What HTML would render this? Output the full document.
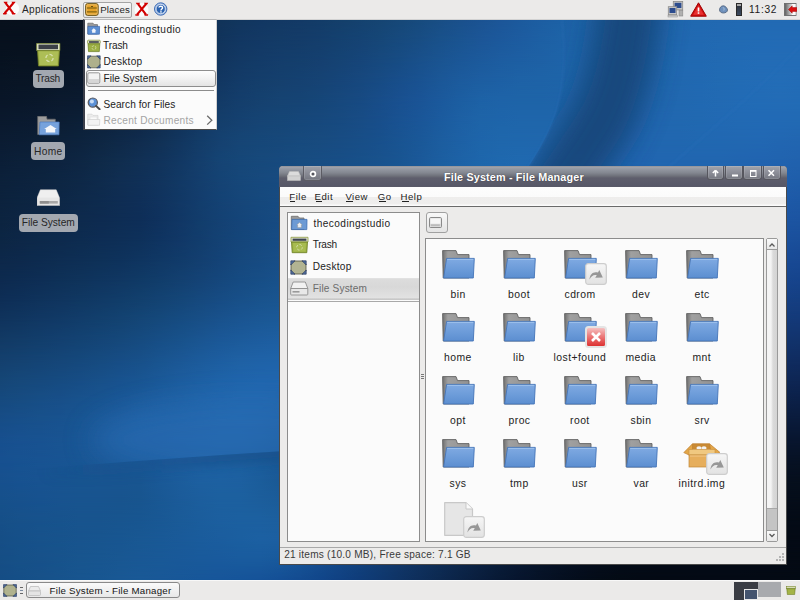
<!DOCTYPE html>
<html><head><meta charset="utf-8">
<style>
*{margin:0;padding:0;box-sizing:border-box}
html,body{width:800px;height:600px;overflow:hidden;background:#123}
body{position:relative;font-family:"Liberation Sans",sans-serif;font-size:11px;color:#1a1a1a}
.abs{position:absolute}
.lbl{font-size:10.6px;color:#262626}
.t{position:absolute;white-space:nowrap;line-height:1}
#wall{position:absolute;left:0;top:0;width:800px;height:600px}
#toppanel{position:absolute;left:0;top:0;width:800px;height:20px;background:#ebeae9;border-bottom:1px solid #d2d2d2}
#botpanel{position:absolute;left:0;top:580px;width:800px;height:20px;background:#ebeae9;border-top:1px solid #f8f8f8}
</style></head><body>
<div id="wallgrid" style="position:absolute;left:0;top:0;width:800px;height:600px;overflow:hidden"><div style="position:absolute;left:0;top:0px;width:800px;height:20px;background:linear-gradient(90deg,#07101c 0px,#07101c 20px,#07111d 40px,#07121e 60px,#081321 80px,#091525 100px,#0a182a 120px,#0b1c31 140px,#0d213a 160px,#0e2644 180px,#0f2c4d 200px,#113055 220px,#11335a 240px,#12355e 260px,#123760 280px,#123862 300px,#133a65 320px,#133d68 340px,#14406b 360px,#15436f 380px,#164674 400px,#17497a 420px,#184b81 440px,#194e88 460px,#1a518e 480px,#1b5494 500px,#1c589a 520px,#1d5c9f 540px,#1d60a3 560px,#1e62a6 580px,#1e64a9 600px,#1f65ab 620px,#2066ac 640px,#2067ae 660px,#2167af 680px,#2168b0 700px,#2268b1 720px,#2269b2 740px,#2269b3 760px,#2269b3 780px,#2269b3 800px)"></div><div style="position:absolute;left:0;top:0px;width:800px;height:20px;background:linear-gradient(90deg,#07101c 0px,#07111d 20px,#07111e 40px,#07121f 60px,#081322 80px,#091526 100px,#0a182b 120px,#0b1c32 140px,#0d213c 160px,#0e2746 180px,#102e51 200px,#113359 220px,#12365e 240px,#123762 260px,#133964 280px,#133a66 300px,#133c68 320px,#143f6b 340px,#14426f 360px,#154573 380px,#164878 400px,#174b7e 420px,#194e85 440px,#1a508c 460px,#1b5392 480px,#1c5698 500px,#1c5a9d 520px,#1d5ea2 540px,#1d62a6 560px,#1e64a8 580px,#1f65aa 600px,#1f66ac 620px,#2067ad 640px,#2067af 660px,#2168b0 680px,#2169b1 700px,#2269b2 720px,#226ab3 740px,#226ab4 760px,#226ab4 780px,#226ab4 800px);-webkit-mask-image:linear-gradient(transparent,#000);mask-image:linear-gradient(transparent,#000)"></div><div style="position:absolute;left:0;top:20px;width:800px;height:20px;background:linear-gradient(90deg,#07101c 0px,#07111d 20px,#07111e 40px,#07121f 60px,#081322 80px,#091526 100px,#0a182b 120px,#0b1c32 140px,#0d213c 160px,#0e2746 180px,#102e51 200px,#113359 220px,#12365e 240px,#123762 260px,#133964 280px,#133a66 300px,#133c68 320px,#143f6b 340px,#14426f 360px,#154573 380px,#164878 400px,#174b7e 420px,#194e85 440px,#1a508c 460px,#1b5392 480px,#1c5698 500px,#1c5a9d 520px,#1d5ea2 540px,#1d62a6 560px,#1e64a8 580px,#1f65aa 600px,#1f66ac 620px,#2067ad 640px,#2067af 660px,#2168b0 680px,#2169b1 700px,#2269b2 720px,#226ab3 740px,#226ab4 760px,#226ab4 780px,#226ab4 800px)"></div><div style="position:absolute;left:0;top:20px;width:800px;height:20px;background:linear-gradient(90deg,#07111e 0px,#07111e 20px,#07121f 40px,#081321 60px,#091424 80px,#091627 100px,#0a192d 120px,#0c1d34 140px,#0d223e 160px,#0f2949 180px,#102f53 200px,#11345c 220px,#123762 240px,#133965 260px,#133b67 280px,#143c69 300px,#143e6c 320px,#144170 340px,#154374 360px,#164778 380px,#174a7e 400px,#184d84 420px,#19518b 440px,#1a5491 460px,#1c5697 480px,#1c599c 500px,#1d5ca0 520px,#1d60a4 540px,#1e63a7 560px,#1e64a9 580px,#1f66ab 600px,#1f66ad 620px,#2067ae 640px,#2068af 660px,#2168b0 680px,#2169b2 700px,#226ab3 720px,#226bb4 740px,#226bb5 760px,#236bb5 780px,#236bb5 800px);-webkit-mask-image:linear-gradient(transparent,#000);mask-image:linear-gradient(transparent,#000)"></div><div style="position:absolute;left:0;top:40px;width:800px;height:20px;background:linear-gradient(90deg,#07111e 0px,#07111e 20px,#07121f 40px,#081321 60px,#091424 80px,#091627 100px,#0a192d 120px,#0c1d34 140px,#0d223e 160px,#0f2949 180px,#102f53 200px,#11345c 220px,#123762 240px,#133965 260px,#133b67 280px,#143c69 300px,#143e6c 320px,#144170 340px,#154374 360px,#164778 380px,#174a7e 400px,#184d84 420px,#19518b 440px,#1a5491 460px,#1c5697 480px,#1c599c 500px,#1d5ca0 520px,#1d60a4 540px,#1e63a7 560px,#1e64a9 580px,#1f66ab 600px,#1f66ad 620px,#2067ae 640px,#2068af 660px,#2168b0 680px,#2169b2 700px,#226ab3 720px,#226bb4 740px,#226bb5 760px,#236bb5 780px,#236bb5 800px)"></div><div style="position:absolute;left:0;top:40px;width:800px;height:20px;background:linear-gradient(90deg,#071220 0px,#081321 20px,#081322 40px,#091424 60px,#091627 80px,#0a172a 100px,#0b1a2f 120px,#0c1e37 140px,#0d2340 160px,#0f2a4b 180px,#103056 200px,#12355e 220px,#133964 240px,#133b68 260px,#143d6b 280px,#143f6d 300px,#154070 320px,#154374 340px,#164579 360px,#17497e 380px,#174c84 400px,#19508b 420px,#1a5491 440px,#1b5797 460px,#1c5a9c 480px,#1d5da0 500px,#1d5fa3 520px,#1e61a5 540px,#1e63a8 560px,#1e65aa 580px,#1f66ac 600px,#1f66ad 620px,#2067ae 640px,#2068af 660px,#2169b1 680px,#2169b2 700px,#226ab3 720px,#226bb5 740px,#236cb6 760px,#236cb6 780px,#236cb6 800px);-webkit-mask-image:linear-gradient(transparent,#000);mask-image:linear-gradient(transparent,#000)"></div><div style="position:absolute;left:0;top:60px;width:800px;height:20px;background:linear-gradient(90deg,#071220 0px,#081321 20px,#081322 40px,#091424 60px,#091627 80px,#0a172a 100px,#0b1a2f 120px,#0c1e37 140px,#0d2340 160px,#0f2a4b 180px,#103056 200px,#12355e 220px,#133964 240px,#133b68 260px,#143d6b 280px,#143f6d 300px,#154070 320px,#154374 340px,#164579 360px,#17497e 380px,#174c84 400px,#19508b 420px,#1a5491 440px,#1b5797 460px,#1c5a9c 480px,#1d5da0 500px,#1d5fa3 520px,#1e61a5 540px,#1e63a8 560px,#1e65aa 580px,#1f66ac 600px,#1f66ad 620px,#2067ae 640px,#2068af 660px,#2169b1 680px,#2169b2 700px,#226ab3 720px,#226bb5 740px,#236cb6 760px,#236cb6 780px,#236cb6 800px)"></div><div style="position:absolute;left:0;top:60px;width:800px;height:20px;background:linear-gradient(90deg,#081424 0px,#091525 20px,#091626 40px,#091728 60px,#0a182b 80px,#0b1a2e 100px,#0b1c33 120px,#0c203a 140px,#0e2543 160px,#0f2c4e 180px,#113259 200px,#123762 220px,#133b68 240px,#143e6b 260px,#15406e 280px,#154171 300px,#164374 320px,#164579 340px,#17487e 360px,#174b84 380px,#184e8b 400px,#195291 420px,#1b5797 440px,#1c5b9d 460px,#1d5ea1 480px,#1d60a4 500px,#1e62a6 520px,#1e63a7 540px,#1e64a8 560px,#1f65aa 580px,#1f66ac 600px,#2066ad 620px,#2067af 640px,#2068af 660px,#2168b0 680px,#2169b2 700px,#226bb3 720px,#226cb5 740px,#236cb6 760px,#236db7 780px,#236cb6 800px);-webkit-mask-image:linear-gradient(transparent,#000);mask-image:linear-gradient(transparent,#000)"></div><div style="position:absolute;left:0;top:80px;width:800px;height:20px;background:linear-gradient(90deg,#081424 0px,#091525 20px,#091626 40px,#091728 60px,#0a182b 80px,#0b1a2e 100px,#0b1c33 120px,#0c203a 140px,#0e2543 160px,#0f2c4e 180px,#113259 200px,#123762 220px,#133b68 240px,#143e6b 260px,#15406e 280px,#154171 300px,#164374 320px,#164579 340px,#17487e 360px,#174b84 380px,#184e8b 400px,#195291 420px,#1b5797 440px,#1c5b9d 460px,#1d5ea1 480px,#1d60a4 500px,#1e62a6 520px,#1e63a7 540px,#1e64a8 560px,#1f65aa 580px,#1f66ac 600px,#2066ad 620px,#2067af 640px,#2068af 660px,#2168b0 680px,#2169b2 700px,#226bb3 720px,#226cb5 740px,#236cb6 760px,#236db7 780px,#236cb6 800px)"></div><div style="position:absolute;left:0;top:80px;width:800px;height:20px;background:linear-gradient(90deg,#091628 0px,#091729 20px,#0a182b 40px,#0b1a2e 60px,#0b1b30 80px,#0c1d34 100px,#0c1f38 120px,#0d223e 140px,#0f2848 160px,#102e53 180px,#12355d 200px,#133a66 220px,#143e6c 240px,#15416f 260px,#164372 280px,#164474 300px,#164678 320px,#17487d 340px,#174a82 360px,#184d89 380px,#195090 400px,#1a5496 420px,#1b599c 440px,#1c5ea1 460px,#1d62a6 480px,#1e63a8 500px,#1e64a8 520px,#1e64a8 540px,#1f64a9 560px,#1f65ab 580px,#2066ad 600px,#2066ae 620px,#2067af 640px,#2167af 660px,#2168b0 680px,#2169b2 700px,#226ab3 720px,#226bb5 740px,#226cb6 760px,#236cb6 780px,#226cb6 800px);-webkit-mask-image:linear-gradient(transparent,#000);mask-image:linear-gradient(transparent,#000)"></div><div style="position:absolute;left:0;top:100px;width:800px;height:20px;background:linear-gradient(90deg,#091628 0px,#091729 20px,#0a182b 40px,#0b1a2e 60px,#0b1b30 80px,#0c1d34 100px,#0c1f38 120px,#0d223e 140px,#0f2848 160px,#102e53 180px,#12355d 200px,#133a66 220px,#143e6c 240px,#15416f 260px,#164372 280px,#164474 300px,#164678 320px,#17487d 340px,#174a82 360px,#184d89 380px,#195090 400px,#1a5496 420px,#1b599c 440px,#1c5ea1 460px,#1d62a6 480px,#1e63a8 500px,#1e64a8 520px,#1e64a8 540px,#1f64a9 560px,#1f65ab 580px,#2066ad 600px,#2066ae 620px,#2067af 640px,#2167af 660px,#2168b0 680px,#2169b2 700px,#226ab3 720px,#226bb5 740px,#226cb6 760px,#236cb6 780px,#226cb6 800px)"></div><div style="position:absolute;left:0;top:100px;width:800px;height:20px;background:linear-gradient(90deg,#0a192d 0px,#0a1a2f 20px,#0b1b31 40px,#0c1d33 60px,#0c1f37 80px,#0d213b 100px,#0e2440 120px,#0f2746 140px,#102c4f 160px,#113259 180px,#133863 200px,#143e6b 220px,#154170 240px,#164474 260px,#164676 280px,#174779 300px,#17487c 320px,#174a80 340px,#184c85 360px,#184e8b 380px,#195292 400px,#1a5698 420px,#1b5b9e 440px,#1d60a4 460px,#1e64a8 480px,#1e65aa 500px,#1f66ab 520px,#1f66ab 540px,#1f66ab 560px,#2066ac 580px,#2066ae 600px,#2066af 620px,#2166af 640px,#2167b0 660px,#2168b0 680px,#2169b1 700px,#2269b3 720px,#226ab4 740px,#226ab5 760px,#226ab5 780px,#226ab4 800px);-webkit-mask-image:linear-gradient(transparent,#000);mask-image:linear-gradient(transparent,#000)"></div><div style="position:absolute;left:0;top:120px;width:800px;height:20px;background:linear-gradient(90deg,#0a192d 0px,#0a1a2f 20px,#0b1b31 40px,#0c1d33 60px,#0c1f37 80px,#0d213b 100px,#0e2440 120px,#0f2746 140px,#102c4f 160px,#113259 180px,#133863 200px,#143e6b 220px,#154170 240px,#164474 260px,#164676 280px,#174779 300px,#17487c 320px,#174a80 340px,#184c85 360px,#184e8b 380px,#195292 400px,#1a5698 420px,#1b5b9e 440px,#1d60a4 460px,#1e64a8 480px,#1e65aa 500px,#1f66ab 520px,#1f66ab 540px,#1f66ab 560px,#2066ac 580px,#2066ae 600px,#2066af 620px,#2166af 640px,#2167b0 660px,#2168b0 680px,#2169b1 700px,#2269b3 720px,#226ab4 740px,#226ab5 760px,#226ab5 780px,#226ab4 800px)"></div><div style="position:absolute;left:0;top:120px;width:800px;height:20px;background:linear-gradient(90deg,#0b1c32 0px,#0b1d34 20px,#0c1f36 40px,#0d2139 60px,#0d233d 80px,#0e2642 100px,#0f2948 120px,#102c4e 140px,#113155 160px,#12365f 180px,#133c68 200px,#154170 220px,#164575 240px,#164778 260px,#17487a 280px,#174a7d 300px,#184b7f 320px,#184c83 340px,#184e87 360px,#18508c 380px,#195492 400px,#1a5898 420px,#1c5d9f 440px,#1d61a5 460px,#1e65aa 480px,#1f67ac 500px,#1f67ad 520px,#2067ad 540px,#2067ae 560px,#2066ae 580px,#2066af 600px,#2166af 620px,#2166b0 640px,#2167b0 660px,#2167b0 680px,#2168b1 700px,#2168b2 720px,#2268b2 740px,#2268b3 760px,#2267b2 780px,#2266b1 800px);-webkit-mask-image:linear-gradient(transparent,#000);mask-image:linear-gradient(transparent,#000)"></div><div style="position:absolute;left:0;top:140px;width:800px;height:20px;background:linear-gradient(90deg,#0b1c32 0px,#0b1d34 20px,#0c1f36 40px,#0d2139 60px,#0d233d 80px,#0e2642 100px,#0f2948 120px,#102c4e 140px,#113155 160px,#12365f 180px,#133c68 200px,#154170 220px,#164575 240px,#164778 260px,#17487a 280px,#174a7d 300px,#184b7f 320px,#184c83 340px,#184e87 360px,#18508c 380px,#195492 400px,#1a5898 420px,#1c5d9f 440px,#1d61a5 460px,#1e65aa 480px,#1f67ac 500px,#1f67ad 520px,#2067ad 540px,#2067ae 560px,#2066ae 580px,#2066af 600px,#2166af 620px,#2166b0 640px,#2167b0 660px,#2167b0 680px,#2168b1 700px,#2168b2 720px,#2268b2 740px,#2268b3 760px,#2267b2 780px,#2266b1 800px)"></div><div style="position:absolute;left:0;top:140px;width:800px;height:20px;background:linear-gradient(90deg,#0b1e37 0px,#0c2039 20px,#0c213b 40px,#0d233f 60px,#0e2643 80px,#0f2a48 100px,#102d4e 120px,#113054 140px,#11335b 160px,#123863 180px,#143e6c 200px,#154474 220px,#164778 240px,#17497b 260px,#174a7e 280px,#184c80 300px,#184d83 320px,#184e86 340px,#185089 360px,#19528d 380px,#195592 400px,#1b5999 420px,#1c5ea0 440px,#1d62a6 460px,#1e66ab 480px,#1f68ae 500px,#2069af 520px,#2068b0 540px,#2067b0 560px,#2167b0 580px,#2166b0 600px,#2166b0 620px,#2165b0 640px,#2166b0 660px,#2166b0 680px,#2166b0 700px,#2166b0 720px,#2165b0 740px,#2164b0 760px,#2163af 780px,#2162ae 800px);-webkit-mask-image:linear-gradient(transparent,#000);mask-image:linear-gradient(transparent,#000)"></div><div style="position:absolute;left:0;top:160px;width:800px;height:20px;background:linear-gradient(90deg,#0b1e37 0px,#0c2039 20px,#0c213b 40px,#0d233f 60px,#0e2643 80px,#0f2a48 100px,#102d4e 120px,#113054 140px,#11335b 160px,#123863 180px,#143e6c 200px,#154474 220px,#164778 240px,#17497b 260px,#174a7e 280px,#184c80 300px,#184d83 320px,#184e86 340px,#185089 360px,#19528d 380px,#195592 400px,#1b5999 420px,#1c5ea0 440px,#1d62a6 460px,#1e66ab 480px,#1f68ae 500px,#2069af 520px,#2068b0 540px,#2067b0 560px,#2167b0 580px,#2166b0 600px,#2166b0 620px,#2165b0 640px,#2166b0 660px,#2166b0 680px,#2166b0 700px,#2166b0 720px,#2165b0 740px,#2164b0 760px,#2163af 780px,#2162ae 800px)"></div><div style="position:absolute;left:0;top:160px;width:800px;height:20px;background:linear-gradient(90deg,#0c213a 0px,#0c223d 20px,#0d243f 40px,#0d2643 60px,#0e2847 80px,#0f2b4c 100px,#102e52 120px,#103057 140px,#11345d 160px,#123965 180px,#143e6d 200px,#154374 220px,#164779 240px,#17497d 260px,#174b80 280px,#184d82 300px,#184f85 320px,#195088 340px,#19528c 360px,#195490 380px,#1a5795 400px,#1b5b9b 420px,#1c60a1 440px,#1d63a7 460px,#1f66ac 480px,#1f68af 500px,#2069b0 520px,#2069b1 540px,#2068b1 560px,#2167b1 580px,#2166b0 600px,#2165b0 620px,#2164b0 640px,#2064af 660px,#2063af 680px,#2063af 700px,#2062ae 720px,#2061ae 740px,#2060ad 760px,#205fac 780px,#1f5eaa 800px);-webkit-mask-image:linear-gradient(transparent,#000);mask-image:linear-gradient(transparent,#000)"></div><div style="position:absolute;left:0;top:180px;width:800px;height:20px;background:linear-gradient(90deg,#0c213a 0px,#0c223d 20px,#0d243f 40px,#0d2643 60px,#0e2847 80px,#0f2b4c 100px,#102e52 120px,#103057 140px,#11345d 160px,#123965 180px,#143e6d 200px,#154374 220px,#164779 240px,#17497d 260px,#174b80 280px,#184d82 300px,#184f85 320px,#195088 340px,#19528c 360px,#195490 380px,#1a5795 400px,#1b5b9b 420px,#1c60a1 440px,#1d63a7 460px,#1f66ac 480px,#1f68af 500px,#2069b0 520px,#2069b1 540px,#2068b1 560px,#2167b1 580px,#2166b0 600px,#2165b0 620px,#2164b0 640px,#2064af 660px,#2063af 680px,#2063af 700px,#2062ae 720px,#2061ae 740px,#2060ad 760px,#205fac 780px,#1f5eaa 800px)"></div><div style="position:absolute;left:0;top:180px;width:800px;height:20px;background:linear-gradient(90deg,#0c223d 0px,#0c2440 20px,#0d2543 40px,#0d2746 60px,#0e294a 80px,#0e2b4e 100px,#0f2d53 120px,#0f2f58 140px,#10335e 160px,#113865 180px,#133d6d 200px,#144274 220px,#164679 240px,#16497d 260px,#174b81 280px,#184d84 300px,#185088 320px,#19528b 340px,#19548f 360px,#1a5793 380px,#1b5a98 400px,#1c5d9d 420px,#1d61a3 440px,#1e64a8 460px,#1f67ac 480px,#1f69af 500px,#2069b1 520px,#2069b1 540px,#2068b1 560px,#2066b0 580px,#2065b0 600px,#2063af 620px,#2062ae 640px,#2061ae 660px,#1f60ad 680px,#1f5fad 700px,#1f5eac 720px,#1f5dab 740px,#1e5caa 760px,#1e5aa8 780px,#1d59a6 800px);-webkit-mask-image:linear-gradient(transparent,#000);mask-image:linear-gradient(transparent,#000)"></div><div style="position:absolute;left:0;top:200px;width:800px;height:20px;background:linear-gradient(90deg,#0c223d 0px,#0c2440 20px,#0d2543 40px,#0d2746 60px,#0e294a 80px,#0e2b4e 100px,#0f2d53 120px,#0f2f58 140px,#10335e 160px,#113865 180px,#133d6d 200px,#144274 220px,#164679 240px,#16497d 260px,#174b81 280px,#184d84 300px,#185088 320px,#19528b 340px,#19548f 360px,#1a5793 380px,#1b5a98 400px,#1c5d9d 420px,#1d61a3 440px,#1e64a8 460px,#1f67ac 480px,#1f69af 500px,#2069b1 520px,#2069b1 540px,#2068b1 560px,#2066b0 580px,#2065b0 600px,#2063af 620px,#2062ae 640px,#2061ae 660px,#1f60ad 680px,#1f5fad 700px,#1f5eac 720px,#1f5dab 740px,#1e5caa 760px,#1e5aa8 780px,#1d59a6 800px)"></div><div style="position:absolute;left:0;top:200px;width:800px;height:20px;background:linear-gradient(90deg,#0c2440 0px,#0d2543 20px,#0d2746 40px,#0d2849 60px,#0e2a4d 80px,#0e2b50 100px,#0e2d54 120px,#0e2e58 140px,#0f325e 160px,#113765 180px,#123d6c 200px,#144173 220px,#154579 240px,#16487e 260px,#174b82 280px,#184e86 300px,#19518a 320px,#19548e 340px,#1a5692 360px,#1b5996 380px,#1b5c9b 400px,#1c5fa0 420px,#1d63a5 440px,#1e65a9 460px,#1f68ad 480px,#2069af 500px,#2069b0 520px,#2068b1 540px,#2067b0 560px,#2065af 580px,#2063ae 600px,#2061ad 620px,#1f60ac 640px,#1f5eab 660px,#1e5daa 680px,#1e5ba9 700px,#1d5aa8 720px,#1d58a7 740px,#1d57a5 760px,#1c55a3 780px,#1c54a1 800px);-webkit-mask-image:linear-gradient(transparent,#000);mask-image:linear-gradient(transparent,#000)"></div><div style="position:absolute;left:0;top:220px;width:800px;height:20px;background:linear-gradient(90deg,#0c2440 0px,#0d2543 20px,#0d2746 40px,#0d2849 60px,#0e2a4d 80px,#0e2b50 100px,#0e2d54 120px,#0e2e58 140px,#0f325e 160px,#113765 180px,#123d6c 200px,#144173 220px,#154579 240px,#16487e 260px,#174b82 280px,#184e86 300px,#19518a 320px,#19548e 340px,#1a5692 360px,#1b5996 380px,#1b5c9b 400px,#1c5fa0 420px,#1d63a5 440px,#1e65a9 460px,#1f68ad 480px,#2069af 500px,#2069b0 520px,#2068b1 540px,#2067b0 560px,#2065af 580px,#2063ae 600px,#2061ad 620px,#1f60ac 640px,#1f5eab 660px,#1e5daa 680px,#1e5ba9 700px,#1d5aa8 720px,#1d58a7 740px,#1d57a5 760px,#1c55a3 780px,#1c54a1 800px)"></div><div style="position:absolute;left:0;top:220px;width:800px;height:20px;background:linear-gradient(90deg,#0c2644 0px,#0d2747 20px,#0d294a 40px,#0d2a4d 60px,#0d2c50 80px,#0e2d54 100px,#0e2f57 120px,#0e315b 140px,#0f3461 160px,#113867 180px,#123d6d 200px,#144274 220px,#15467a 240px,#16497f 260px,#174c84 280px,#185088 300px,#19538d 320px,#1a5691 340px,#1a5895 360px,#1b5b99 380px,#1c5e9d 400px,#1d61a2 420px,#1e64a6 440px,#1e66aa 460px,#1f68ad 480px,#2069af 500px,#2068b0 520px,#2067b0 540px,#2065af 560px,#2063ad 580px,#1f61ab 600px,#1f5faa 620px,#1e5ca8 640px,#1e5aa7 660px,#1d58a6 680px,#1d56a5 700px,#1c55a3 720px,#1b53a1 740px,#1b529f 760px,#1a509e 780px,#1a4f9b 800px);-webkit-mask-image:linear-gradient(transparent,#000);mask-image:linear-gradient(transparent,#000)"></div><div style="position:absolute;left:0;top:240px;width:800px;height:20px;background:linear-gradient(90deg,#0c2644 0px,#0d2747 20px,#0d294a 40px,#0d2a4d 60px,#0d2c50 80px,#0e2d54 100px,#0e2f57 120px,#0e315b 140px,#0f3461 160px,#113867 180px,#123d6d 200px,#144274 220px,#15467a 240px,#16497f 260px,#174c84 280px,#185088 300px,#19538d 320px,#1a5691 340px,#1a5895 360px,#1b5b99 380px,#1c5e9d 400px,#1d61a2 420px,#1e64a6 440px,#1e66aa 460px,#1f68ad 480px,#2069af 500px,#2068b0 520px,#2067b0 540px,#2065af 560px,#2063ad 580px,#1f61ab 600px,#1f5faa 620px,#1e5ca8 640px,#1e5aa7 660px,#1d58a6 680px,#1d56a5 700px,#1c55a3 720px,#1b53a1 740px,#1b529f 760px,#1a509e 780px,#1a4f9b 800px)"></div><div style="position:absolute;left:0;top:240px;width:800px;height:20px;background:linear-gradient(90deg,#0d284a 0px,#0d294c 20px,#0d2b4f 40px,#0e2d52 60px,#0e2f55 80px,#0e3158 100px,#0e325c 120px,#0f3560 140px,#103865 160px,#113b6a 180px,#133f70 200px,#144377 220px,#16487d 240px,#174b82 260px,#184e87 280px,#18528b 300px,#195590 320px,#1a5894 340px,#1b5b98 360px,#1c5d9c 380px,#1c60a0 400px,#1d63a4 420px,#1e65a8 440px,#1f67ab 460px,#1f68ad 480px,#1f68ae 500px,#2067ae 520px,#1f66ad 540px,#1f64ac 560px,#1f61aa 580px,#1e5ea7 600px,#1e5ba5 620px,#1d59a3 640px,#1c56a1 660px,#1c54a0 680px,#1b529e 700px,#1b509d 720px,#1a4e9a 740px,#194c98 760px,#184b96 780px,#184994 800px);-webkit-mask-image:linear-gradient(transparent,#000);mask-image:linear-gradient(transparent,#000)"></div><div style="position:absolute;left:0;top:260px;width:800px;height:20px;background:linear-gradient(90deg,#0d284a 0px,#0d294c 20px,#0d2b4f 40px,#0e2d52 60px,#0e2f55 80px,#0e3158 100px,#0e325c 120px,#0f3560 140px,#103865 160px,#113b6a 180px,#133f70 200px,#144377 220px,#16487d 240px,#174b82 260px,#184e87 280px,#18528b 300px,#195590 320px,#1a5894 340px,#1b5b98 360px,#1c5d9c 380px,#1c60a0 400px,#1d63a4 420px,#1e65a8 440px,#1f67ab 460px,#1f68ad 480px,#1f68ae 500px,#2067ae 520px,#1f66ad 540px,#1f64ac 560px,#1f61aa 580px,#1e5ea7 600px,#1e5ba5 620px,#1d59a3 640px,#1c56a1 660px,#1c54a0 680px,#1b529e 700px,#1b509d 720px,#1a4e9a 740px,#194c98 760px,#184b96 780px,#184994 800px)"></div><div style="position:absolute;left:0;top:260px;width:800px;height:20px;background:linear-gradient(90deg,#0d2a4f 0px,#0d2c52 20px,#0e2e55 40px,#0e3158 60px,#0f335b 80px,#0f355f 100px,#103762 120px,#103a66 140px,#113d6b 160px,#134070 180px,#144376 200px,#15477c 220px,#164b82 240px,#174e86 260px,#18518b 280px,#19548f 300px,#1a5794 320px,#1b5a97 340px,#1c5d9b 360px,#1c5f9f 380px,#1d61a2 400px,#1e63a5 420px,#1e65a8 440px,#1f67ab 460px,#1f68ac 480px,#1f67ad 500px,#1f66ac 520px,#1f64aa 540px,#1e61a8 560px,#1e5ea5 580px,#1d5aa2 600px,#1c579f 620px,#1c549c 640px,#1b519a 660px,#1a4f98 680px,#1a4d96 700px,#194a94 720px,#184992 740px,#184790 760px,#17458e 780px,#16448c 800px);-webkit-mask-image:linear-gradient(transparent,#000);mask-image:linear-gradient(transparent,#000)"></div><div style="position:absolute;left:0;top:280px;width:800px;height:20px;background:linear-gradient(90deg,#0d2a4f 0px,#0d2c52 20px,#0e2e55 40px,#0e3158 60px,#0f335b 80px,#0f355f 100px,#103762 120px,#103a66 140px,#113d6b 160px,#134070 180px,#144376 200px,#15477c 220px,#164b82 240px,#174e86 260px,#18518b 280px,#19548f 300px,#1a5794 320px,#1b5a97 340px,#1c5d9b 360px,#1c5f9f 380px,#1d61a2 400px,#1e63a5 420px,#1e65a8 440px,#1f67ab 460px,#1f68ac 480px,#1f67ad 500px,#1f66ac 520px,#1f64aa 540px,#1e61a8 560px,#1e5ea5 580px,#1d5aa2 600px,#1c579f 620px,#1c549c 640px,#1b519a 660px,#1a4f98 680px,#1a4d96 700px,#194a94 720px,#184992 740px,#184790 760px,#17458e 780px,#16448c 800px)"></div><div style="position:absolute;left:0;top:280px;width:800px;height:20px;background:linear-gradient(90deg,#0e2e56 0px,#0e3059 20px,#0f335c 40px,#10355f 60px,#103862 80px,#113a66 100px,#113d6a 120px,#12406e 140px,#134373 160px,#144678 180px,#16497e 200px,#174c84 220px,#185089 240px,#19538d 260px,#1a5590 280px,#1a5894 300px,#1b5a98 320px,#1c5c9b 340px,#1c5e9e 360px,#1d60a1 380px,#1d62a3 400px,#1e64a5 420px,#1e65a8 440px,#1e66aa 460px,#1f67ab 480px,#1f66aa 500px,#1e64a9 520px,#1e61a6 540px,#1d5da2 560px,#1c5a9e 580px,#1c569b 600px,#1b5297 620px,#1a4f94 640px,#194c91 660px,#19498f 680px,#18478d 700px,#17458a 720px,#174388 740px,#164186 760px,#164084 780px,#153f82 800px);-webkit-mask-image:linear-gradient(transparent,#000);mask-image:linear-gradient(transparent,#000)"></div><div style="position:absolute;left:0;top:300px;width:800px;height:20px;background:linear-gradient(90deg,#0e2e56 0px,#0e3059 20px,#0f335c 40px,#10355f 60px,#103862 80px,#113a66 100px,#113d6a 120px,#12406e 140px,#134373 160px,#144678 180px,#16497e 200px,#174c84 220px,#185089 240px,#19538d 260px,#1a5590 280px,#1a5894 300px,#1b5a98 320px,#1c5c9b 340px,#1c5e9e 360px,#1d60a1 380px,#1d62a3 400px,#1e64a5 420px,#1e65a8 440px,#1e66aa 460px,#1f67ab 480px,#1f66aa 500px,#1e64a9 520px,#1e61a6 540px,#1d5da2 560px,#1c5a9e 580px,#1c569b 600px,#1b5297 620px,#1a4f94 640px,#194c91 660px,#19498f 680px,#18478d 700px,#17458a 720px,#174388 740px,#164186 760px,#164084 780px,#153f82 800px)"></div><div style="position:absolute;left:0;top:300px;width:800px;height:20px;background:linear-gradient(90deg,#10345d 0px,#103660 20px,#113864 40px,#113a67 60px,#123d6b 80px,#12406e 100px,#134372 120px,#144677 140px,#15497c 160px,#164c82 180px,#184f87 200px,#19528d 220px,#1a5592 240px,#1b5895 260px,#1b5a98 280px,#1c5c9b 300px,#1c5d9d 320px,#1d5e9f 340px,#1d60a0 360px,#1d61a2 380px,#1d62a3 400px,#1e63a5 420px,#1e64a6 440px,#1e65a7 460px,#1e65a7 480px,#1e64a7 500px,#1d61a4 520px,#1d5da0 540px,#1c599b 560px,#1b5597 580px,#1a5192 600px,#194d8e 620px,#18498a 640px,#184687 660px,#174384 680px,#164182 700px,#163f7f 720px,#153d7d 740px,#143b7b 760px,#143a79 780px,#143978 800px);-webkit-mask-image:linear-gradient(transparent,#000);mask-image:linear-gradient(transparent,#000)"></div><div style="position:absolute;left:0;top:320px;width:800px;height:20px;background:linear-gradient(90deg,#10345d 0px,#103660 20px,#113864 40px,#113a67 60px,#123d6b 80px,#12406e 100px,#134372 120px,#144677 140px,#15497c 160px,#164c82 180px,#184f87 200px,#19528d 220px,#1a5592 240px,#1b5895 260px,#1b5a98 280px,#1c5c9b 300px,#1c5d9d 320px,#1d5e9f 340px,#1d60a0 360px,#1d61a2 380px,#1d62a3 400px,#1e63a5 420px,#1e64a6 440px,#1e65a7 460px,#1e65a7 480px,#1e64a7 500px,#1d61a4 520px,#1d5da0 540px,#1c599b 560px,#1b5597 580px,#1a5192 600px,#194d8e 620px,#18498a 640px,#184687 660px,#174384 680px,#164182 700px,#163f7f 720px,#153d7d 740px,#143b7b 760px,#143a79 780px,#143978 800px)"></div><div style="position:absolute;left:0;top:320px;width:800px;height:20px;background:linear-gradient(90deg,#123a65 0px,#123c68 20px,#123e6c 40px,#134070 60px,#134373 80px,#144577 100px,#15487b 120px,#164b80 140px,#174e86 160px,#18528b 180px,#1a5591 200px,#1b5897 220px,#1c5b9b 240px,#1d5d9f 260px,#1e5fa1 280px,#1e5fa2 300px,#1e60a2 320px,#1d60a2 340px,#1d60a2 360px,#1d61a2 380px,#1d61a2 400px,#1d62a2 420px,#1d62a3 440px,#1d62a3 460px,#1d61a2 480px,#1d5fa0 500px,#1c5c9d 520px,#1b5898 540px,#1a5493 560px,#194f8d 580px,#184a88 600px,#174684 620px,#16437f 640px,#163f7c 660px,#153d79 680px,#143b76 700px,#143874 720px,#133772 740px,#133570 760px,#12346e 780px,#12336c 800px);-webkit-mask-image:linear-gradient(transparent,#000);mask-image:linear-gradient(transparent,#000)"></div><div style="position:absolute;left:0;top:340px;width:800px;height:20px;background:linear-gradient(90deg,#123a65 0px,#123c68 20px,#123e6c 40px,#134070 60px,#134373 80px,#144577 100px,#15487b 120px,#164b80 140px,#174e86 160px,#18528b 180px,#1a5591 200px,#1b5897 220px,#1c5b9b 240px,#1d5d9f 260px,#1e5fa1 280px,#1e5fa2 300px,#1e60a2 320px,#1d60a2 340px,#1d60a2 360px,#1d61a2 380px,#1d61a2 400px,#1d62a2 420px,#1d62a3 440px,#1d62a3 460px,#1d61a2 480px,#1d5fa0 500px,#1c5c9d 520px,#1b5898 540px,#1a5493 560px,#194f8d 580px,#184a88 600px,#174684 620px,#16437f 640px,#163f7c 660px,#153d79 680px,#143b76 700px,#143874 720px,#133772 740px,#133570 760px,#12346e 780px,#12336c 800px)"></div><div style="position:absolute;left:0;top:340px;width:800px;height:20px;background:linear-gradient(90deg,#14406e 0px,#144271 20px,#144475 40px,#154678 60px,#15487c 80px,#164b80 100px,#174d85 120px,#185089 140px,#19548f 160px,#1b5795 180px,#1c5b9b 200px,#1d5ea0 220px,#1f61a4 240px,#1f62a7 260px,#1f63a9 280px,#1f63a8 300px,#1e62a6 320px,#1e61a4 340px,#1d60a2 360px,#1d60a1 380px,#1d5fa0 400px,#1d5f9f 420px,#1c5e9e 440px,#1c5e9c 460px,#1c5c9b 480px,#1b5a98 500px,#1a5693 520px,#19528e 540px,#184d88 560px,#174883 580px,#16447d 600px,#153f78 620px,#143c74 640px,#133870 660px,#13366c 680px,#12346a 700px,#123267 720px,#113065 740px,#112e63 760px,#102d62 780px,#102c60 800px);-webkit-mask-image:linear-gradient(transparent,#000);mask-image:linear-gradient(transparent,#000)"></div><div style="position:absolute;left:0;top:360px;width:800px;height:20px;background:linear-gradient(90deg,#14406e 0px,#144271 20px,#144475 40px,#154678 60px,#15487c 80px,#164b80 100px,#174d85 120px,#185089 140px,#19548f 160px,#1b5795 180px,#1c5b9b 200px,#1d5ea0 220px,#1f61a4 240px,#1f62a7 260px,#1f63a9 280px,#1f63a8 300px,#1e62a6 320px,#1e61a4 340px,#1d60a2 360px,#1d60a1 380px,#1d5fa0 400px,#1d5f9f 420px,#1c5e9e 440px,#1c5e9c 460px,#1c5c9b 480px,#1b5a98 500px,#1a5693 520px,#19528e 540px,#184d88 560px,#174883 580px,#16447d 600px,#153f78 620px,#143c74 640px,#133870 660px,#13366c 680px,#12346a 700px,#123267 720px,#113065 740px,#112e63 760px,#102d62 780px,#102c60 800px)"></div><div style="position:absolute;left:0;top:360px;width:800px;height:20px;background:linear-gradient(90deg,#154676 0px,#16487a 20px,#16497d 40px,#164b81 60px,#174d85 80px,#185089 100px,#18528e 120px,#195592 140px,#1b5998 160px,#1d5d9e 180px,#1e60a3 200px,#1f63a8 220px,#2065ac 240px,#2166ae 260px,#2166ae 280px,#2064aa 300px,#1f62a7 320px,#1e60a3 340px,#1d5fa1 360px,#1d5e9e 380px,#1c5d9c 400px,#1c5b9a 420px,#1b5a98 440px,#1b5895 460px,#1a5692 480px,#19538e 500px,#184f89 520px,#174b83 540px,#16467d 560px,#154177 580px,#143c71 600px,#13386c 620px,#123467 640px,#113163 660px,#112e60 680px,#102c5d 700px,#0f2b5a 720px,#0f2958 740px,#0e2857 760px,#0e2756 780px,#0e2654 800px);-webkit-mask-image:linear-gradient(transparent,#000);mask-image:linear-gradient(transparent,#000)"></div><div style="position:absolute;left:0;top:380px;width:800px;height:20px;background:linear-gradient(90deg,#154676 0px,#16487a 20px,#16497d 40px,#164b81 60px,#174d85 80px,#185089 100px,#18528e 120px,#195592 140px,#1b5998 160px,#1d5d9e 180px,#1e60a3 200px,#1f63a8 220px,#2065ac 240px,#2166ae 260px,#2166ae 280px,#2064aa 300px,#1f62a7 320px,#1e60a3 340px,#1d5fa1 360px,#1d5e9e 380px,#1c5d9c 400px,#1c5b9a 420px,#1b5a98 440px,#1b5895 460px,#1a5692 480px,#19538e 500px,#184f89 520px,#174b83 540px,#16467d 560px,#154177 580px,#143c71 600px,#13386c 620px,#123467 640px,#113163 660px,#112e60 680px,#102c5d 700px,#0f2b5a 720px,#0f2958 740px,#0e2857 760px,#0e2756 780px,#0e2654 800px)"></div><div style="position:absolute;left:0;top:380px;width:800px;height:20px;background:linear-gradient(90deg,#164a7f 0px,#174c82 20px,#174e86 40px,#184f89 60px,#18528d 80px,#195491 100px,#1a5796 120px,#1c5b9b 140px,#1d5ea0 160px,#1e61a4 180px,#1f64a9 200px,#2066ad 220px,#2168af 240px,#2168b0 260px,#2166ad 280px,#1f63a9 300px,#1e61a5 320px,#1d5fa1 340px,#1c5d9d 360px,#1c5b9a 380px,#1b5997 400px,#1b5794 420px,#1a5590 440px,#19538c 460px,#185088 480px,#174c83 500px,#16487e 520px,#154377 540px,#143e71 560px,#13396b 580px,#123565 600px,#11305f 620px,#102d5a 640px,#0f2a56 660px,#0e2753 680px,#0e2650 700px,#0d244e 720px,#0d234c 740px,#0c224a 760px,#0c2149 780px,#0b2048 800px);-webkit-mask-image:linear-gradient(transparent,#000);mask-image:linear-gradient(transparent,#000)"></div><div style="position:absolute;left:0;top:400px;width:800px;height:20px;background:linear-gradient(90deg,#164a7f 0px,#174c82 20px,#174e86 40px,#184f89 60px,#18528d 80px,#195491 100px,#1a5796 120px,#1c5b9b 140px,#1d5ea0 160px,#1e61a4 180px,#1f64a9 200px,#2066ad 220px,#2168af 240px,#2168b0 260px,#2166ad 280px,#1f63a9 300px,#1e61a5 320px,#1d5fa1 340px,#1c5d9d 360px,#1c5b9a 380px,#1b5997 400px,#1b5794 420px,#1a5590 440px,#19538c 460px,#185088 480px,#174c83 500px,#16487e 520px,#154377 540px,#143e71 560px,#13396b 580px,#123565 600px,#11305f 620px,#102d5a 640px,#0f2a56 660px,#0e2753 680px,#0e2650 700px,#0d244e 720px,#0d234c 740px,#0c224a 760px,#0c2149 780px,#0b2048 800px)"></div><div style="position:absolute;left:0;top:400px;width:800px;height:20px;background:linear-gradient(90deg,#174d87 0px,#174f8a 20px,#18518c 40px,#18528f 60px,#195592 80px,#1a5897 100px,#1c5b9c 120px,#1d5fa2 140px,#1e61a5 160px,#1f63a8 180px,#2065ab 200px,#2168ae 220px,#2169b0 240px,#2167ae 260px,#1f64a9 280px,#1e61a4 300px,#1d5ea0 320px,#1c5c9c 340px,#1b5a98 360px,#1b5795 380px,#1a5591 400px,#19538d 420px,#185088 440px,#174d83 460px,#16497e 480px,#154578 500px,#144072 520px,#133b6c 540px,#123765 560px,#10325f 580px,#0f2d59 600px,#0e2953 620px,#0e264e 640px,#0d234a 660px,#0c2147 680px,#0c1f44 700px,#0b1e42 720px,#0b1d3f 740px,#0a1c3d 760px,#0a1b3c 780px,#0a1b3b 800px);-webkit-mask-image:linear-gradient(transparent,#000);mask-image:linear-gradient(transparent,#000)"></div><div style="position:absolute;left:0;top:420px;width:800px;height:20px;background:linear-gradient(90deg,#174d87 0px,#174f8a 20px,#18518c 40px,#18528f 60px,#195592 80px,#1a5897 100px,#1c5b9c 120px,#1d5fa2 140px,#1e61a5 160px,#1f63a8 180px,#2065ab 200px,#2168ae 220px,#2169b0 240px,#2167ae 260px,#1f64a9 280px,#1e61a4 300px,#1d5ea0 320px,#1c5c9c 340px,#1b5a98 360px,#1b5795 380px,#1a5591 400px,#19538d 420px,#185088 440px,#174d83 460px,#16497e 480px,#154578 500px,#144072 520px,#133b6c 540px,#123765 560px,#10325f 580px,#0f2d59 600px,#0e2953 620px,#0e264e 640px,#0d234a 660px,#0c2147 680px,#0c1f44 700px,#0b1e42 720px,#0b1d3f 740px,#0a1c3d 760px,#0a1b3c 780px,#0a1b3b 800px)"></div><div style="position:absolute;left:0;top:420px;width:800px;height:20px;background:linear-gradient(90deg,#174f8e 0px,#185190 20px,#185291 40px,#195492 60px,#195695 80px,#1a5898 100px,#1c5c9d 120px,#1d5fa3 140px,#1e61a5 160px,#1f63a7 180px,#1f65a9 200px,#2066ab 220px,#2066ab 240px,#1f64a7 260px,#1d60a1 280px,#1c5c9c 300px,#1b5a99 320px,#1b5896 340px,#1a5693 360px,#19548f 380px,#19518a 400px,#184e85 420px,#174a80 440px,#16467a 460px,#144274 480px,#133e6d 500px,#123966 520px,#113460 540px,#0f2f59 560px,#0e2b53 580px,#0d274d 600px,#0c2348 620px,#0c2043 640px,#0b1d3f 660px,#0a1b3c 680px,#0a1a39 700px,#091937 720px,#091834 740px,#091732 760px,#081630 780px,#08162f 800px);-webkit-mask-image:linear-gradient(transparent,#000);mask-image:linear-gradient(transparent,#000)"></div><div style="position:absolute;left:0;top:440px;width:800px;height:20px;background:linear-gradient(90deg,#174f8e 0px,#185190 20px,#185291 40px,#195492 60px,#195695 80px,#1a5898 100px,#1c5c9d 120px,#1d5fa3 140px,#1e61a5 160px,#1f63a7 180px,#1f65a9 200px,#2066ab 220px,#2066ab 240px,#1f64a7 260px,#1d60a1 280px,#1c5c9c 300px,#1b5a99 320px,#1b5896 340px,#1a5693 360px,#19548f 380px,#19518a 400px,#184e85 420px,#174a80 440px,#16467a 460px,#144274 480px,#133e6d 500px,#123966 520px,#113460 540px,#0f2f59 560px,#0e2b53 580px,#0d274d 600px,#0c2348 620px,#0c2043 640px,#0b1d3f 660px,#0a1b3c 680px,#0a1a39 700px,#091937 720px,#091834 740px,#091732 760px,#081630 780px,#08162f 800px)"></div><div style="position:absolute;left:0;top:440px;width:800px;height:20px;background:linear-gradient(90deg,#175090 0px,#175291 20px,#185392 40px,#185493 60px,#195694 80px,#1a5795 100px,#1a5998 120px,#1b5b9b 140px,#1c5d9e 160px,#1d60a2 180px,#1e62a5 200px,#1e64a6 220px,#1e63a4 240px,#1c5f9f 260px,#1b5a98 280px,#1a5895 300px,#1a5794 320px,#195591 340px,#19538e 360px,#185089 380px,#174c84 400px,#16497e 420px,#154578 440px,#144071 460px,#133c6a 480px,#113763 500px,#10325b 520px,#0e2d54 540px,#0d284d 560px,#0c2448 580px,#0b2042 600px,#0a1d3d 620px,#0a1b39 640px,#091836 660px,#091732 680px,#081630 700px,#08152d 720px,#08142a 740px,#071328 760px,#071226 780px,#071224 800px);-webkit-mask-image:linear-gradient(transparent,#000);mask-image:linear-gradient(transparent,#000)"></div><div style="position:absolute;left:0;top:460px;width:800px;height:20px;background:linear-gradient(90deg,#175090 0px,#175291 20px,#185392 40px,#185493 60px,#195694 80px,#1a5795 100px,#1a5998 120px,#1b5b9b 140px,#1c5d9e 160px,#1d60a2 180px,#1e62a5 200px,#1e64a6 220px,#1e63a4 240px,#1c5f9f 260px,#1b5a98 280px,#1a5895 300px,#1a5794 320px,#195591 340px,#19538e 360px,#185089 380px,#174c84 400px,#16497e 420px,#154578 440px,#144071 460px,#133c6a 480px,#113763 500px,#10325b 520px,#0e2d54 540px,#0d284d 560px,#0c2448 580px,#0b2042 600px,#0a1d3d 620px,#0a1b39 640px,#091836 660px,#091732 680px,#081630 700px,#08152d 720px,#08142a 740px,#071328 760px,#071226 780px,#071224 800px)"></div><div style="position:absolute;left:0;top:460px;width:800px;height:20px;background:linear-gradient(90deg,#17508e 0px,#175290 20px,#185391 40px,#185491 60px,#185591 80px,#195591 100px,#195591 120px,#195691 140px,#1a5997 160px,#1c5d9c 180px,#1d60a0 200px,#1d61a1 220px,#1d60a0 240px,#1b5d9b 260px,#1a5995 280px,#195793 300px,#195591 320px,#18538e 340px,#185089 360px,#174c84 380px,#16487e 400px,#154477 420px,#143f70 440px,#123b68 460px,#113561 480px,#0f3059 500px,#0e2b51 520px,#0c2649 540px,#0b2243 560px,#0a1e3d 580px,#091b38 600px,#091834 620px,#081630 640px,#08142d 660px,#07132a 680px,#071228 700px,#071125 720px,#061023 740px,#061020 760px,#060f1e 780px,#060f1d 800px);-webkit-mask-image:linear-gradient(transparent,#000);mask-image:linear-gradient(transparent,#000)"></div><div style="position:absolute;left:0;top:480px;width:800px;height:20px;background:linear-gradient(90deg,#17508e 0px,#175290 20px,#185391 40px,#185491 60px,#185591 80px,#195591 100px,#195591 120px,#195691 140px,#1a5997 160px,#1c5d9c 180px,#1d60a0 200px,#1d61a1 220px,#1d60a0 240px,#1b5d9b 260px,#1a5995 280px,#195793 300px,#195591 320px,#18538e 340px,#185089 360px,#174c84 380px,#16487e 400px,#154477 420px,#143f70 440px,#123b68 460px,#113561 480px,#0f3059 500px,#0e2b51 520px,#0c2649 540px,#0b2243 560px,#0a1e3d 580px,#091b38 600px,#091834 620px,#081630 640px,#08142d 660px,#07132a 680px,#071228 700px,#071125 720px,#061023 740px,#061020 760px,#060f1e 780px,#060f1d 800px)"></div><div style="position:absolute;left:0;top:480px;width:800px;height:20px;background:linear-gradient(90deg,#16508b 0px,#17518d 20px,#17528f 40px,#18538f 60px,#18548f 80px,#18548f 100px,#18548e 120px,#18558f 140px,#195894 160px,#1b5b99 180px,#1c5e9d 200px,#1c609f 220px,#1c609f 240px,#1c5e9c 260px,#1b5c99 280px,#1a5895 300px,#195591 320px,#18518c 340px,#174d86 360px,#164980 380px,#154479 400px,#133f71 420px,#123a69 440px,#113560 460px,#0f3058 480px,#0d2a4f 500px,#0c2547 520px,#0a2040 540px,#091c39 560px,#091934 580px,#08162f 600px,#07142c 620px,#071328 640px,#071126 660px,#061023 680px,#060f21 700px,#060e1f 720px,#050e1d 740px,#050d1b 760px,#050d1a 780px,#050d19 800px);-webkit-mask-image:linear-gradient(transparent,#000);mask-image:linear-gradient(transparent,#000)"></div><div style="position:absolute;left:0;top:500px;width:800px;height:20px;background:linear-gradient(90deg,#16508b 0px,#17518d 20px,#17528f 40px,#18538f 60px,#18548f 80px,#18548f 100px,#18548e 120px,#18558f 140px,#195894 160px,#1b5b99 180px,#1c5e9d 200px,#1c609f 220px,#1c609f 240px,#1c5e9c 260px,#1b5c99 280px,#1a5895 300px,#195591 320px,#18518c 340px,#174d86 360px,#164980 380px,#154479 400px,#133f71 420px,#123a69 440px,#113560 460px,#0f3058 480px,#0d2a4f 500px,#0c2547 520px,#0a2040 540px,#091c39 560px,#091934 580px,#08162f 600px,#07142c 620px,#071328 640px,#071126 660px,#061023 680px,#060f21 700px,#060e1f 720px,#050e1d 740px,#050d1b 760px,#050d1a 780px,#050d19 800px)"></div><div style="position:absolute;left:0;top:500px;width:800px;height:20px;background:linear-gradient(90deg,#164f88 0px,#17518a 20px,#17528c 40px,#17538d 60px,#18548e 80px,#18548e 100px,#18558f 120px,#185691 140px,#195894 160px,#1a5b98 180px,#1b5d9c 200px,#1c5f9f 220px,#1c60a0 240px,#1c60a0 260px,#1c5f9e 280px,#1a5a99 300px,#185592 320px,#174f8b 340px,#154a84 360px,#14457c 380px,#134073 400px,#123b6b 420px,#113662 440px,#0f3059 460px,#0e2b50 480px,#0c2547 500px,#0a203f 520px,#091c37 540px,#081831 560px,#07152c 580px,#071328 600px,#061124 620px,#061022 640px,#060f20 660px,#050e1e 680px,#050d1c 700px,#050d1b 720px,#050c19 740px,#040c18 760px,#040b17 780px,#040b16 800px);-webkit-mask-image:linear-gradient(transparent,#000);mask-image:linear-gradient(transparent,#000)"></div><div style="position:absolute;left:0;top:520px;width:800px;height:20px;background:linear-gradient(90deg,#164f88 0px,#17518a 20px,#17528c 40px,#17538d 60px,#18548e 80px,#18548e 100px,#18558f 120px,#185691 140px,#195894 160px,#1a5b98 180px,#1b5d9c 200px,#1c5f9f 220px,#1c60a0 240px,#1c60a0 260px,#1c5f9e 280px,#1a5a99 300px,#185592 320px,#174f8b 340px,#154a84 360px,#14457c 380px,#134073 400px,#123b6b 420px,#113662 440px,#0f3059 460px,#0e2b50 480px,#0c2547 500px,#0a203f 520px,#091c37 540px,#081831 560px,#07152c 580px,#071328 600px,#061124 620px,#061022 640px,#060f20 660px,#050e1e 680px,#050d1c 700px,#050d1b 720px,#050c19 740px,#040c18 760px,#040b17 780px,#040b16 800px)"></div><div style="position:absolute;left:0;top:520px;width:800px;height:20px;background:linear-gradient(90deg,#164e86 0px,#165089 20px,#17528b 40px,#17538c 60px,#18548e 80px,#18558f 100px,#185691 120px,#195893 140px,#195996 160px,#1a5a99 180px,#1a5c9c 200px,#1b5d9e 220px,#1b5fa0 240px,#1c60a2 260px,#1c5fa1 280px,#19599a 300px,#175392 320px,#154c8a 340px,#144681 360px,#134178 380px,#123c6e 400px,#113765 420px,#0f315b 440px,#0e2c52 460px,#0c2649 480px,#0a2140 500px,#091c38 520px,#081831 540px,#07142a 560px,#061225 580px,#061021 600px,#050e1e 620px,#050d1c 640px,#050d1b 660px,#050c1a 680px,#050c19 700px,#040c18 720px,#040b17 740px,#040b16 760px,#040a15 780px,#040a15 800px);-webkit-mask-image:linear-gradient(transparent,#000);mask-image:linear-gradient(transparent,#000)"></div><div style="position:absolute;left:0;top:540px;width:800px;height:20px;background:linear-gradient(90deg,#164e86 0px,#165089 20px,#17528b 40px,#17538c 60px,#18548e 80px,#18558f 100px,#185691 120px,#195893 140px,#195996 160px,#1a5a99 180px,#1a5c9c 200px,#1b5d9e 220px,#1b5fa0 240px,#1c60a2 260px,#1c5fa1 280px,#19599a 300px,#175392 320px,#154c8a 340px,#144681 360px,#134178 380px,#123c6e 400px,#113765 420px,#0f315b 440px,#0e2c52 460px,#0c2649 480px,#0a2140 500px,#091c38 520px,#081831 540px,#07142a 560px,#061225 580px,#061021 600px,#050e1e 620px,#050d1c 640px,#050d1b 660px,#050c1a 680px,#050c19 700px,#040c18 720px,#040b17 740px,#040b16 760px,#040a15 780px,#040a15 800px)"></div><div style="position:absolute;left:0;top:540px;width:800px;height:20px;background:linear-gradient(90deg,#164e85 0px,#165088 20px,#17518a 40px,#17538c 60px,#18558e 80px,#185690 100px,#195792 120px,#195895 140px,#195997 160px,#195999 180px,#195a9b 200px,#195a9d 220px,#195b9e 240px,#195b9e 260px,#18599c 280px,#175497 300px,#154d8f 320px,#134787 340px,#12427d 360px,#113d73 380px,#113769 400px,#10325f 420px,#0e2d56 440px,#0d274c 460px,#0b2243 480px,#091d3a 500px,#081832 520px,#07152b 540px,#061225 560px,#050f20 580px,#050d1c 600px,#040c19 620px,#040c18 640px,#040b17 660px,#040b17 680px,#040b16 700px,#040b16 720px,#040b16 740px,#040a15 760px,#040a15 780px,#040a14 800px);-webkit-mask-image:linear-gradient(transparent,#000);mask-image:linear-gradient(transparent,#000)"></div><div style="position:absolute;left:0;top:560px;width:800px;height:20px;background:linear-gradient(90deg,#164e85 0px,#165088 20px,#17518a 40px,#17538c 60px,#18558e 80px,#185690 100px,#195792 120px,#195895 140px,#195997 160px,#195999 180px,#195a9b 200px,#195a9d 220px,#195b9e 240px,#195b9e 260px,#18599c 280px,#175497 300px,#154d8f 320px,#134787 340px,#12427d 360px,#113d73 380px,#113769 400px,#10325f 420px,#0e2d56 440px,#0d274c 460px,#0b2243 480px,#091d3a 500px,#081832 520px,#07152b 540px,#061225 560px,#050f20 580px,#050d1c 600px,#040c19 620px,#040c18 640px,#040b17 660px,#040b17 680px,#040b16 700px,#040b16 720px,#040b16 740px,#040a15 760px,#040a15 780px,#040a14 800px)"></div><div style="position:absolute;left:0;top:560px;width:800px;height:20px;background:linear-gradient(90deg,#164d85 0px,#164f87 20px,#175189 40px,#17538c 60px,#18558f 80px,#185691 100px,#195894 120px,#195996 140px,#195897 160px,#185798 180px,#175699 200px,#175599 220px,#165499 240px,#165298 260px,#144f95 280px,#134b90 300px,#11468a 320px,#104182 340px,#0f3c79 360px,#0f386f 380px,#0f3364 400px,#0e2e5a 420px,#0d2950 440px,#0b2346 460px,#0a1e3d 480px,#081934 500px,#07152d 520px,#061226 540px,#050f20 560px,#040d1b 580px,#040c17 600px,#040b15 620px,#040a14 640px,#040a14 660px,#040a14 680px,#040a15 700px,#040a15 720px,#040a15 740px,#040a15 760px,#040a14 780px,#030a14 800px);-webkit-mask-image:linear-gradient(transparent,#000);mask-image:linear-gradient(transparent,#000)"></div><div style="position:absolute;left:0;top:580px;width:800px;height:20px;background:linear-gradient(90deg,#164d85 0px,#164f87 20px,#175189 40px,#17538c 60px,#18558f 80px,#185691 100px,#195894 120px,#195996 140px,#195897 160px,#185798 180px,#175699 200px,#175599 220px,#165499 240px,#165298 260px,#144f95 280px,#134b90 300px,#11468a 320px,#104182 340px,#0f3c79 360px,#0f386f 380px,#0f3364 400px,#0e2e5a 420px,#0d2950 440px,#0b2346 460px,#0a1e3d 480px,#081934 500px,#07152d 520px,#061226 540px,#050f20 560px,#040d1b 580px,#040c17 600px,#040b15 620px,#040a14 640px,#040a14 660px,#040a14 680px,#040a15 700px,#040a15 720px,#040a15 740px,#040a15 760px,#040a14 780px,#030a14 800px)"></div><div style="position:absolute;left:0;top:580px;width:800px;height:20px;background:linear-gradient(90deg,#154c84 0px,#164e86 20px,#165089 40px,#17528c 60px,#18548e 80px,#185691 100px,#195794 120px,#195896 140px,#185797 160px,#175496 180px,#155296 200px,#145095 220px,#134d93 240px,#124a90 260px,#10468c 280px,#0f4288 300px,#0e3e83 320px,#0d3a7c 340px,#0d3673 360px,#0d3269 380px,#0d2e5f 400px,#0d2a55 420px,#0c254b 440px,#0a2042 460px,#081b39 480px,#071630 500px,#051228 520px,#050f22 540px,#040d1c 560px,#040b17 580px,#030a14 600px,#030912 620px,#030912 640px,#030912 660px,#030912 680px,#030a13 700px,#030a14 720px,#030a14 740px,#030a14 760px,#030a14 780px,#030a14 800px);-webkit-mask-image:linear-gradient(transparent,#000);mask-image:linear-gradient(transparent,#000)"></div></div><svg id="wall" width="800" height="600" viewBox="0 0 800 600">
<defs>
<filter id="bl14" filterUnits="userSpaceOnUse" x="-50" y="-50" width="900" height="700"><feGaussianBlur stdDeviation="14"/></filter>
<filter id="bl6" filterUnits="userSpaceOnUse" x="-50" y="-50" width="900" height="700"><feGaussianBlur stdDeviation="6"/></filter>
<filter id="bl1" filterUnits="userSpaceOnUse" x="-50" y="-50" width="900" height="700"><feGaussianBlur stdDeviation="0.8"/></filter>
<clipPath id="streakclip"><path d="M559,0 C566,40 566,80 556,113 C548,135 540,150 520,180 L900,180 L900,0 Z"/></clipPath>
</defs>
<g clip-path="url(#streakclip)">
<path d="M632,-20 C628,40 618,90 602,120 C588,145 568,170 540,212" stroke="#17406f" stroke-width="64" fill="none" filter="url(#bl14)" opacity="0.78"/>
</g>
<path d="M559,0 C566,40 566,80 556,113 C548,135 540,150 528,168" stroke="#2c6cb4" stroke-width="1.2" fill="none" filter="url(#bl1)" opacity="0.5"/>
<path d="M810,35 C760,90 710,130 660,175" stroke="#2e72bc" stroke-width="1.2" fill="none" filter="url(#bl1)" opacity="0.5"/>
<clipPath id="swclipA"><path d="M-10,472 C100,464 200,456 300,450 L300,300 L-10,300 Z"/></clipPath>
<clipPath id="swclipB"><path d="M-10,472 C100,464 200,456 300,450 L300,600 L-10,600 Z"/></clipPath>
<g clip-path="url(#swclipA)">
<ellipse cx="250" cy="440" rx="160" ry="40" fill="#2b6cb2" opacity="0.55" filter="url(#bl14)"/>
</g>
<linearGradient id="swg" gradientUnits="userSpaceOnUse" x1="40" y1="0" x2="220" y2="0"><stop offset="0" stop-color="#174880" stop-opacity="0"/><stop offset="1" stop-color="#174880" stop-opacity="1"/></linearGradient>
<g clip-path="url(#swclipB)">
<path d="M-20,478 C100,466 220,457 300,452" stroke="url(#swg)" stroke-width="16" fill="none" opacity="0.55" filter="url(#bl6)"/>
</g>

</svg>


<!-- TOP PANEL -->
<div id="toppanel">
  <svg class="abs" style="left:0px;top:0px" width="20" height="18" viewBox="0 0 20 18">
    <circle cx="12.5" cy="8.8" r="6.8" fill="#fbfbfb"/>
    <path d="M5.5,2.8 L13.3,13.3 M13.6,2.8 L4.6,13.3" stroke="#d20000" stroke-width="2.1" fill="none"/>
    <path d="M3.5,1.8 L7.5,1.8 L7,3.3 L4.3,3.3 Z M11.5,1.8 L15.5,1.8 L14.8,3.3 L12.2,3.3 Z M3,13 L7,13 L6.2,14.5 L3.2,14.5 Z M11.5,13 L15.5,13 L15.2,14.5 L12.2,14.5 Z" fill="#d20000"/>
  </svg>
    <div class="abs" style="left:83px;top:2px;width:49px;height:16px;border:1px solid #a4a4a4;border-radius:2px;background:linear-gradient(#f6f6f6,#e4e4e4)"></div>
  <svg class="abs" style="left:84.5px;top:3px" width="14" height="13" viewBox="0 0 14 13">
    <rect x="0.6" y="0.6" width="12.6" height="11.8" rx="2" fill="#d89a30" stroke="#6e5a1e" stroke-width="1"/>
    <rect x="1.8" y="1.8" width="10.2" height="9.4" rx="1" fill="#e6a228" stroke="#f2c878" stroke-width="0.7"/>
    <rect x="2" y="4.2" width="9.8" height="1.6" fill="#9c7418"/>
    <rect x="2" y="8" width="9.8" height="1.6" fill="#9c7418"/>
    <rect x="6" y="3" width="2" height="1" fill="#6a5010"/>
  </svg>
    <svg class="abs" style="left:132px;top:1px" width="20" height="18" viewBox="0 0 20 18">
    <circle cx="9.5" cy="9" r="7" fill="#fbfbfb"/>
    <path d="M5.9,2.8 L14,13.6 M14.3,2.8 L5,13.6" stroke="#d20000" stroke-width="2.1" fill="none"/>
    <path d="M3.8,1.8 L8,1.8 L7.4,3.3 L4.6,3.3 Z M12,1.8 L16.2,1.8 L15.5,3.3 L12.8,3.3 Z M3.2,13.3 L7.4,13.3 L6.6,14.8 L3.4,14.8 Z M12,13.3 L16.2,13.3 L15.9,14.8 L12.7,14.8 Z" fill="#d20000"/>
  </svg>
  <svg class="abs" style="left:154px;top:2px" width="14" height="14" viewBox="0 0 14 14">
    <circle cx="6.7" cy="7" r="6.2" fill="#a8c0e4" stroke="#3e6cb4" stroke-width="1"/>
    <circle cx="6.7" cy="7" r="4.6" fill="#2a62b0" stroke="#dfe8f6" stroke-width="0.8"/>
    <path d="M5,5.6 C5,3.8 8.6,3.8 8.6,5.7 C8.6,7 6.9,7 6.9,8.4" stroke="#fff" stroke-width="1.4" fill="none"/>
    <rect x="6.2" y="9.2" width="1.5" height="1.4" fill="#fff"/>
  </svg>
  <!-- right side -->
  <svg class="abs" style="left:667px;top:1px" width="17" height="17" viewBox="0 0 17 17">
    <rect x="6.3" y="0.5" width="9.4" height="8.4" fill="#c4c4c4" stroke="#8a8a8a" stroke-width="0.8"/>
    <rect x="7.6" y="1.8" width="6.8" height="5.2" fill="#2c4c8e"/>
    <rect x="12" y="9.5" width="3.8" height="5.5" fill="#b0b0b0" stroke="#888" stroke-width="0.6"/>
    <rect x="1.3" y="5.7" width="8.4" height="8" fill="#c8c8c8" stroke="#8a8a8a" stroke-width="0.8"/>
    <rect x="2.5" y="7" width="6" height="5" fill="#2c4c8e"/>
    <rect x="1" y="14.2" width="9.5" height="1.8" fill="#d2d2d2" stroke="#8e8e8e" stroke-width="0.5"/>
  </svg>
  <svg class="abs" style="left:690px;top:2px" width="17" height="15" viewBox="0 0 17 15">
    <path d="M8.5,0.8 L16.3,14.2 L0.7,14.2 Z" fill="#d01010" stroke="#a00000" stroke-linejoin="round"/>
    <path d="M8.5,3.5 L13.8,12.8 L3.2,12.8 Z" fill="#e83030"/>
    <rect x="7.7" y="5.5" width="1.6" height="4" fill="#fff"/><rect x="7.7" y="10.3" width="1.6" height="1.5" fill="#fff"/>
  </svg>
  <svg class="abs" style="left:719px;top:5px" width="9" height="9" viewBox="0 0 9 9">
    <path d="M4.2,0.8 C6.5,0.8 8.5,3.5 8.5,5 C8.5,6.8 6.5,8 4.5,8 C2.2,8 0.5,6.8 0.5,4.8 C0.5,3 2,0.8 4.2,0.8 Z" fill="#6e90bc" stroke="#4e6078" stroke-width="0.8"/>
    <path d="M3.8,2.5 C5,2.5 5.5,4 4.8,5.5" stroke="#b8cce0" stroke-width="0.8" fill="none"/>
  </svg>
  <div class="abs" style="left:736px;top:3px;width:6px;height:13px;background:linear-gradient(#a8a8a8 0,#a8a8a8 2px,#2e3440 2px,#3a4a60);border:1px solid #2a2a2a"></div>
    <svg class="abs" style="left:784px;top:3px" width="13" height="13" viewBox="0 0 13 13">
    <defs><linearGradient id="lg1" x1="0" x2="1"><stop offset="0" stop-color="#5a5a5a"/><stop offset="0.7" stop-color="#e8e8e8"/><stop offset="1" stop-color="#fafafa"/></linearGradient></defs>
    <rect x="0.5" y="0.5" width="11.5" height="12" fill="url(#lg1)" stroke="#6a6a6a" stroke-width="0.9"/>
    <rect x="8" y="1" width="3.5" height="11" fill="#fbfbfb"/>
    <path d="M4.5,6.5 L8.2,2.8 L8.2,4.6 L12.8,4.6 L12.8,8.4 L8.2,8.4 L8.2,10.2 Z" fill="#dc1010" stroke="#a00000" stroke-width="0.5"/>
  </svg>
</div>

<!-- DESKTOP ICONS -->
<svg class="abs" style="left:36px;top:43px" width="25" height="24" viewBox="0 0 25 24">
  <path d="M0.6,0.4 L23.9,0.4 L23.9,7.6 L0.6,7.6 Z" fill="#dfe3c6" stroke="#7e8c34" stroke-width="0.7"/>
  <rect x="2.5" y="1.6" width="19.5" height="4.6" fill="#3c4048"/>
  <path d="M1.5,7.7 L23.5,7.7 L22.5,23 L2.5,23 Z" fill="#a4b44a" stroke="#6e7e24" stroke-width="0.8"/>
  <path d="M3,8.6 L22,8.6 L21.3,22 L3.7,22 Z" fill="#adbe56"/>
  <circle cx="13.5" cy="15" r="3.6" fill="none" stroke="#d8e0b0" stroke-width="1.3" stroke-dasharray="3.5 2"/>
</svg>
<svg class="abs" style="left:37px;top:116px" width="23" height="20" viewBox="0 0 23 20">
  <path d="M0.7,0.3 L9.5,0.3 L10,3.2 L18.3,3.2 L18.3,18.5 L0.7,18.5 Z" fill="#9c9c9c" stroke="#6c6c6c" stroke-width="0.7"/>
  <path d="M3,6 L22.2,6 L22,18.8 L2.2,18.8 Z" fill="#76a2dc" stroke="#4a78bc" stroke-width="0.7"/>
  <path d="M7.2,13 L13.5,9 L19.8,13 L18.2,13 L18.2,16.5 L8.8,16.5 L8.8,13 Z" fill="#f4f6fa"/>
</svg>
<svg class="abs" style="left:37px;top:189px" width="23" height="17" viewBox="0 0 23 17">
  <path d="M3.4,0.8 L19.2,0.8 L22.6,9 L22.6,16.6 L0,16.6 L0,9 Z" fill="#e6e6e6" stroke="#c4c4c4" stroke-width="0.6"/>
  <path d="M3.6,1.2 L19,1.2 L22,8.5 L0.6,8.5 Z" fill="#efefef"/>
  <rect x="2.8" y="12" width="18" height="2.6" fill="#a8a8a8"/>
  <rect x="2.8" y="12" width="9" height="2.6" fill="#8e8e8e"/>
</svg>
<div class="abs" style="left:33px;top:70px;width:31px;height:18px;border-radius:4px;background:#a3a8b0"></div>
<div class="abs" style="left:31px;top:142px;width:34px;height:18px;border-radius:4px;background:#a3a8b0"></div>
<div class="abs" style="left:19px;top:214px;width:59px;height:18px;border-radius:4px;background:#a3a8b0"></div>
<!-- PLACES MENU -->
<div class="abs" style="left:83px;top:19px;width:134px;height:111px;background:#fbfbfb;border-left:2px solid #3c3f4a;border-top:1px solid #b8b8b8;border-bottom:1px solid #4a4a4a;border-right:1px solid #d0d0d0"></div>
<div class="abs" style="left:86px;top:70px;width:130px;height:17px;border:1px solid #8e8e8e;border-radius:3px;background:linear-gradient(#fefefe,#f4f4f4 45%,#e4e4e4)"></div>
<div class="abs" style="left:88px;top:89.5px;width:126px;height:1.5px;background:#8c8c8c"></div>

<!-- menu icons -->
<svg class="abs" style="left:87px;top:22px" width="14" height="13" viewBox="0 0 14 13">
  <path d="M0.8,1.2 L6,1.2 L7.2,2.6 L10.5,2.6 L10.5,12 L0.8,12 Z" fill="#9a9a9a" stroke="#6a6a6a" stroke-width="0.7"/>
  <path d="M0.9,4.4 L12.6,4.4 L12.4,12.2 L0.9,12.2 Z" fill="#5c8ed2" stroke="#3a66ae" stroke-width="0.7"/>
  <path d="M4.3,8.5 L6.8,6.3 L9.3,8.5 L8.5,8.5 L8.5,10.8 L5.1,10.8 L5.1,8.5 Z" fill="#f0f4fa"/>
</svg>
<svg class="abs" style="left:87px;top:39px" width="14" height="14" viewBox="0 0 14 14">
  <rect x="0.6" y="1.2" width="12.6" height="3.6" rx="0.8" fill="#dfe4c8" stroke="#7a8a30" stroke-width="0.7"/>
  <rect x="2" y="2.2" width="9.8" height="1.6" fill="#3a3e48"/>
  <path d="M1,4.8 L12.8,4.8 L12.3,12.6 L1.5,12.6 Z" fill="#9cb044" stroke="#66781e" stroke-width="0.7"/>
  <circle cx="6.9" cy="8.7" r="2" fill="none" stroke="#d4dcac" stroke-width="0.8" stroke-dasharray="2 1.2"/>
</svg>
<svg class="abs" style="left:87px;top:55px" width="14" height="14" viewBox="0 0 14 14">
  <path d="M3,1.2 L10.5,1.2 L13,3.7 L13,10.3 L10.5,12.8 L3,12.8 L0.6,10.3 L0.6,3.7 Z" fill="#aeb08c" stroke="#4e5040" stroke-width="0.7"/>
  <path d="M0.5,0.8 L4,0.8 L0.5,4.3 Z M13.2,0.8 L9.7,0.8 L13.2,4.3 Z M0.5,13 L4,13 L0.5,9.5 Z M13.2,13 L9.7,13 L13.2,9.5 Z" fill="#4a6898" stroke="#2a3a60" stroke-width="0.6"/>
</svg>
<svg class="abs" style="left:87px;top:72px" width="14" height="12" viewBox="0 0 14 12">
  <rect x="0.8" y="0.8" width="12" height="10.4" rx="1.2" fill="#f2f2f2" stroke="#8c8c8c" stroke-width="0.9"/>
  <rect x="1.5" y="7" width="10.6" height="3.6" fill="#d6d6d6"/>
</svg>
<svg class="abs" style="left:87px;top:97px" width="14" height="13" viewBox="0 0 14 13">
  <circle cx="5.8" cy="5.6" r="4.6" fill="#5a90d6" stroke="#5a5a60" stroke-width="1.2"/>
  <circle cx="4.9" cy="4.6" r="2" fill="#c8dcf4"/>
  <path d="M9.2,9 L12.6,12.2" stroke="#4a4a4a" stroke-width="2" stroke-linecap="round"/>
</svg>
<svg class="abs" style="left:87px;top:113px" width="14" height="13" viewBox="0 0 14 13">
  <path d="M0.8,1.2 L5,1.2 L6,2.4 L11,2.4 L11,12 L0.8,12 Z" fill="#ececec" stroke="#d2d2d2" stroke-width="0.7"/>
  <rect x="3" y="4" width="7" height="4" fill="#fafafa" stroke="#d8d8d8" stroke-width="0.5"/>
  <path d="M0.9,6.5 L12.8,6.5 L12.5,12.3 L0.9,12.3 Z" fill="#f2f2f2" stroke="#d0d0d0" stroke-width="0.7"/>
</svg>
<svg class="abs" style="left:206px;top:115px" width="8" height="11" viewBox="0 0 8 11"><path d="M1.2,0.8 L5.8,5.2 L1.2,9.6" stroke="#6a6a6a" stroke-width="1.3" fill="none"/></svg>



<svg width="0" height="0" style="position:absolute">
<defs>
<linearGradient id="fback" x1="0" y1="0" x2="1" y2="0"><stop offset="0" stop-color="#707070"/><stop offset="0.2" stop-color="#a0a0a0"/><stop offset="1" stop-color="#929292"/></linearGradient>
<linearGradient id="ffront" x1="0" y1="0" x2="0" y2="1"><stop offset="0" stop-color="#80aae2"/><stop offset="0.6" stop-color="#6a9ad8"/><stop offset="1" stop-color="#5c8ed0"/></linearGradient>
<linearGradient id="emb" x1="0" y1="0" x2="0" y2="1"><stop offset="0" stop-color="#f6f6f6"/><stop offset="1" stop-color="#e2e2e2"/></linearGradient>
<linearGradient id="embr" x1="0" y1="0" x2="0" y2="1"><stop offset="0" stop-color="#f6caca"/><stop offset="0.45" stop-color="#ec7c7c"/><stop offset="1" stop-color="#dc2a2a"/></linearGradient>
<symbol id="folder" viewBox="0 0 33 29">
  <path d="M0.6,0.6 L14,0.6 L15.5,4.6 L27,4.6 L27,28 L1.2,28 Z" fill="url(#fback)" stroke="#626262" stroke-width="0.9"/>
  <path d="M4.6,8.4 L32.3,8.4 L31.3,28 L1.6,28 Z" fill="url(#ffront)" stroke="#4474b8" stroke-width="0.9"/>
  <path d="M5.2,9.4 L31.2,9.4" stroke="#a6c6ee" stroke-width="0.8"/>
</symbol>
<symbol id="emblink" viewBox="0 0 22 22">
  <rect x="0.7" y="0.7" width="20.6" height="20.6" rx="2.5" fill="url(#emb)" stroke="#cdcdcd" stroke-width="1.2"/>
  <path d="M4.5,16.5 C4.8,11 8.5,8.2 13,9.6 L14.3,7 L17.8,14.6 L10.2,14.8 L11.8,12.2 C8.8,11.2 6.4,12.8 4.5,16.5 Z" fill="#979797"/>
</symbol>
<symbol id="embx" viewBox="0 0 22 22">
  <rect x="1" y="1" width="20" height="20" rx="2.5" fill="url(#embr)" stroke="#e4e4e4" stroke-width="2"/>
  <path d="M7,7 L15,15 M15,7 L7,15" stroke="#fff" stroke-width="2.6"/>
</symbol>
</defs>
</svg>

<!-- WINDOW -->
<div class="abs" style="left:279px;top:166px;width:508px;height:399px;background:#ecebea;border:1px solid #4a4a4a;border-top:none;border-radius:4px 4px 0 0"></div>
<div class="abs" style="left:279px;top:166px;width:508px;height:21px;border-radius:4px 4px 0 0;background:linear-gradient(#8a8a90 0,#a2a4ac 1px,#9498a2 3px,#82868f 7px,#6e7079 10px,#5e5e6c 12px,#575868 20px,#5a5a66 21px)"></div>
<!-- title icons -->
<svg class="abs" style="left:287px;top:171px" width="14" height="10" viewBox="0 0 14 10">
  <path d="M2.5,0.5 L11.5,0.5 L13.5,5 L0.5,5 Z" fill="#dcdcdc" stroke="#bdbdbd" stroke-width="0.6"/>
  <rect x="0.5" y="5" width="13" height="4.5" fill="#d2d2d2" stroke="#bdbdbd" stroke-width="0.6"/>
</svg>
<div class="abs" style="left:303px;top:166px;width:19px;height:15px;border:1px solid #5c5c64;border-top:none;border-radius:0 0 3px 3px;box-shadow:inset 0 0 0 1px rgba(255,255,255,0.12);background:linear-gradient(#a0a2aa,#8a8c96 50%,#74767f)"></div>
<svg class="abs" style="left:307.5px;top:168.5px" width="10" height="10" viewBox="0 0 10 10"><circle cx="5" cy="5" r="2.4" fill="#55565e" stroke="#fff" stroke-width="1.7"/></svg>
<!-- title buttons -->
<div class="abs" style="left:707px;top:166px;width:17px;height:14px;border:1px solid #56565e;border-top:none;border-radius:0 0 3px 3px;box-shadow:inset 0 0 0 1px rgba(255,255,255,0.12);background:linear-gradient(#a2a4ac,#8c8e98 50%,#767881)"></div>
<div class="abs" style="left:725px;top:166px;width:18px;height:14px;border:1px solid #56565e;border-top:none;border-radius:0 0 3px 3px;box-shadow:inset 0 0 0 1px rgba(255,255,255,0.12);background:linear-gradient(#a2a4ac,#8c8e98 50%,#767881)"></div>
<div class="abs" style="left:743px;top:166px;width:19px;height:14px;border:1px solid #56565e;border-top:none;border-radius:0 0 3px 3px;box-shadow:inset 0 0 0 1px rgba(255,255,255,0.12);background:linear-gradient(#a2a4ac,#8c8e98 50%,#767881)"></div>
<div class="abs" style="left:763px;top:166px;width:18px;height:14px;border:1px solid #56565e;border-top:none;border-radius:0 0 3px 3px;box-shadow:inset 0 0 0 1px rgba(255,255,255,0.12);background:linear-gradient(#a2a4ac,#8c8e98 50%,#767881)"></div>
<svg class="abs" style="left:707px;top:166px" width="74" height="14" viewBox="0 0 74 14">
  <path d="M8.5,4.2 L5.8,7 M8.5,4.2 L11.2,7 M8.5,4.5 L8.5,10.5" stroke="#fff" stroke-width="1.5" fill="none"/>
  <rect x="25" y="8.5" width="6" height="2" fill="#fff"/>
  <rect x="43.5" y="4.5" width="5.5" height="6" fill="none" stroke="#fff" stroke-width="1"/>
  <rect x="43.5" y="4" width="5.5" height="1.8" fill="#fff"/>
  <path d="M61.5,4.2 L67,9.8 M67,4.2 L61.5,9.8" stroke="#fff" stroke-width="1.5"/>
</svg>
<!-- menubar -->
<div class="abs" style="left:280px;top:187px;width:506px;height:20px;background:linear-gradient(#fdfdfd 0,#fbfbfb 10px,#eeedec 10px,#efeeed 17px,#fbfbfb 18px);border-bottom:1px solid #6a6a6a"></div>
<div class="abs" style="left:290px;top:201px;width:5px;height:1px;background:#222"></div>
<div class="abs" style="left:315.5px;top:201px;width:6px;height:1px;background:#222"></div>
<div class="abs" style="left:345.5px;top:201px;width:7px;height:1px;background:#222"></div>
<div class="abs" style="left:378.5px;top:201px;width:7px;height:1px;background:#222"></div>
<div class="abs" style="left:401.5px;top:201px;width:7px;height:1px;background:#222"></div>
<!-- side pane -->
<div class="abs" style="left:287px;top:212px;width:133px;height:330px;background:#fbfbfb;border:1px solid #8c8c8c"></div>
<div class="abs" style="left:288px;top:278px;width:131px;height:22px;background:linear-gradient(#e6e6e6 0,#dcdcdc 1px,#d8d8d8 40%,#e2e2e2 90%,#c8c8c8 95%)"></div>
<div class="abs" style="left:288px;top:301px;width:131px;height:1px;background:#a8a8a8"></div>

<svg class="abs" style="left:290px;top:215px" width="18" height="16" viewBox="0 0 18 16">
  <path d="M1.3,1.3 L8,1.3 L9.5,3 L14,3 L14,14.5 L1.3,14.5 Z" fill="#9a9a9a" stroke="#6e6e6e" stroke-width="0.8"/>
  <path d="M2,4.4 L17,4.4 L16.8,14.6 L1.6,14.6 Z" fill="#6c9ad4" stroke="#3e6eb4" stroke-width="0.8"/>
  <path d="M6.8,10 L9.5,7.6 L12.2,10 L11.3,10 L11.3,12.6 L7.7,12.6 L7.7,10 Z" fill="#e6eef8" stroke="#a89880" stroke-width="0.4"/>
</svg>
<svg class="abs" style="left:290px;top:236px" width="19" height="18" viewBox="0 0 19 18">
  <path d="M1,1.3 L18,1.3 L18,6 L1,6 Z" fill="#e4e8d4" stroke="#8a9840" stroke-width="0.8"/>
  <rect x="2.6" y="2.6" width="13.8" height="2.2" fill="#3e4450"/>
  <path d="M1.5,6 L17.5,6 L16.8,16.7 L2.2,16.7 Z" fill="#9cb044" stroke="#6a7c22" stroke-width="0.8"/>
  <path d="M3,7 L16,7 L15.5,15.5 L3.5,15.5 Z" fill="#a8bc50"/>
  <circle cx="9.5" cy="11.3" r="2.8" fill="none" stroke="#d8e0b4" stroke-width="0.9" stroke-dasharray="2.5 1.8"/>
</svg>
<svg class="abs" style="left:290px;top:260px" width="17" height="15" viewBox="0 0 17 15">
  <path d="M4,1 L13,1 L16,4 L16,11 L13,14 L4,14 L1,11 L1,4 Z" fill="#b2b492" stroke="#4e5040" stroke-width="0.8"/>
  <path d="M0.8,0.8 L5,0.8 L0.8,5 Z M16.2,0.8 L12,0.8 L16.2,5 Z M0.8,14.2 L5,14.2 L0.8,10 Z M16.2,14.2 L12,14.2 L16.2,10 Z" fill="#4e6c9c" stroke="#2e3e60" stroke-width="0.7"/>
</svg>
<svg class="abs" style="left:290px;top:281px" width="19" height="15" viewBox="0 0 19 15">
  <path d="M3.2,1 L15.3,1 L17.8,7.5 L0.7,7.5 Z" fill="#f2f2f2" stroke="#8e8e8e" stroke-width="0.9"/>
  <path d="M0.7,7.5 L17.8,7.5 L17.8,13.2 Q17.8,14 17,14 L1.5,14 Q0.7,14 0.7,13.2 Z" fill="#e8e8e8" stroke="#8e8e8e" stroke-width="0.9"/>
  <rect x="2.5" y="10" width="7" height="1.6" fill="#9a9a9a"/>
</svg>
<!-- toolbar button -->
<div class="abs" style="left:426px;top:212px;width:22px;height:21px;border:1px solid #a0a0a0;border-radius:3px;background:linear-gradient(#f8f8f8,#e4e4e4)"></div>
<svg class="abs" style="left:429px;top:217px" width="13" height="11" viewBox="0 0 13 11">
  <rect x="0.6" y="0.6" width="11.8" height="10" rx="1" fill="#f6f6f6" stroke="#7e7e7e" stroke-width="1"/>
  <rect x="1.2" y="6.8" width="10.6" height="3.2" fill="#d8d8d8"/>
  <rect x="1.8" y="7.6" width="9" height="1" fill="#a8a8a8"/>
</svg>
<!-- icon view -->
<div class="abs" style="left:425px;top:238px;width:339px;height:304px;background:#fbfbfb;border:1px solid #8c8c8c"></div>

<!-- ICON GRID -->
<svg class="abs" style="left:442px;top:250px" width="33" height="29"><use href="#folder"/></svg>
<svg class="abs" style="left:503px;top:250px" width="33" height="29"><use href="#folder"/></svg>
<svg class="abs" style="left:564px;top:250px" width="33" height="29"><use href="#folder"/></svg>
<svg class="abs" style="left:585px;top:263px" width="22" height="22"><use href="#emblink"/></svg>
<svg class="abs" style="left:625px;top:250px" width="33" height="29"><use href="#folder"/></svg>
<svg class="abs" style="left:686px;top:250px" width="33" height="29"><use href="#folder"/></svg>
<svg class="abs" style="left:442px;top:313px" width="33" height="29"><use href="#folder"/></svg>
<svg class="abs" style="left:503px;top:313px" width="33" height="29"><use href="#folder"/></svg>
<svg class="abs" style="left:564px;top:313px" width="33" height="29"><use href="#folder"/></svg>
<svg class="abs" style="left:585px;top:326px" width="22" height="22"><use href="#embx"/></svg>
<svg class="abs" style="left:625px;top:313px" width="33" height="29"><use href="#folder"/></svg>
<svg class="abs" style="left:686px;top:313px" width="33" height="29"><use href="#folder"/></svg>
<svg class="abs" style="left:442px;top:376px" width="33" height="29"><use href="#folder"/></svg>
<svg class="abs" style="left:503px;top:376px" width="33" height="29"><use href="#folder"/></svg>
<svg class="abs" style="left:564px;top:376px" width="33" height="29"><use href="#folder"/></svg>
<svg class="abs" style="left:625px;top:376px" width="33" height="29"><use href="#folder"/></svg>
<svg class="abs" style="left:686px;top:376px" width="33" height="29"><use href="#folder"/></svg>
<svg class="abs" style="left:442px;top:439px" width="33" height="29"><use href="#folder"/></svg>
<svg class="abs" style="left:503px;top:439px" width="33" height="29"><use href="#folder"/></svg>
<svg class="abs" style="left:564px;top:439px" width="33" height="29"><use href="#folder"/></svg>
<svg class="abs" style="left:625px;top:439px" width="33" height="29"><use href="#folder"/></svg>
<svg class="abs" style="left:683px;top:443px" width="38" height="25" viewBox="0 0 38 25">
  <path d="M9.5,0.8 L26.5,0.8 L31,6.5 L5,6.5 Z" fill="#c98a34"/>
  <ellipse cx="16" cy="5" rx="2.6" ry="1.8" fill="#f2f2f2"/><ellipse cx="21" cy="5" rx="2.6" ry="1.8" fill="#f2f2f2"/>
  <path d="M9.5,0.8 L0.8,9.6 L6,12 L9.5,6.5 Z" fill="#e2a648" stroke="#c08030" stroke-width="0.7"/>
  <path d="M26.5,0.8 L36.8,9.3 L32,12 L27.5,6.5 Z" fill="#e2a648" stroke="#c08030" stroke-width="0.7"/>
  <path d="M9.5,0.8 L26.5,0.8" stroke="#c08030" stroke-width="0.8"/>
  <rect x="6" y="6.5" width="26" height="5.5" fill="#f0c880" stroke="#c89040" stroke-width="0.6"/>
  <rect x="6" y="12" width="26" height="12" fill="#e6ae5c" stroke="#c08838" stroke-width="0.7"/>
  <path d="M7,13 L31,13" stroke="#f2c888" stroke-width="1"/>
</svg>
<svg class="abs" style="left:706px;top:453px" width="22" height="22"><use href="#emblink"/></svg>
<svg class="abs" style="left:444px;top:502px" width="30" height="34" viewBox="0 0 30 34">
  <path d="M0.7,0.7 L22,0.7 L28.5,7 L28.5,33.3 L0.7,33.3 Z" fill="#e6e6e6" stroke="#c8c8c8" stroke-width="1.2" stroke-linejoin="round"/>
  <path d="M22,0.7 L22,7 L28.5,7" fill="#fafafa" stroke="#c8c8c8" stroke-width="1"/>
</svg>
<svg class="abs" style="left:463px;top:516px" width="22" height="22"><use href="#emblink"/></svg>

<!-- scrollbar -->
<div class="abs" style="left:766px;top:238px;width:12px;height:304px;background:#c4c4c4;border:1px solid #9a9a9a;border-radius:2px"></div>
<div class="abs" style="left:767px;top:239px;width:10px;height:11px;background:linear-gradient(#fafafa,#e8e8e8);border-bottom:1px solid #9a9a9a"></div>
<div class="abs" style="left:767px;top:250px;width:10px;height:259px;background:linear-gradient(90deg,#f4f4f4 0,#f4f4f4 40%,#dadada 60%,#d4d4d4 100%);border-bottom:1px solid #a8a8a8"></div>
<div class="abs" style="left:767px;top:530px;width:10px;height:11px;background:linear-gradient(#fafafa,#e8e8e8);border-top:1px solid #9a9a9a"></div>
<svg class="abs" style="left:767px;top:239px" width="10" height="303" viewBox="0 0 10 303">
  <path d="M2.5,7.5 L5,5 L7.5,7.5" stroke="#5a5a5a" stroke-width="1.3" fill="none"/>
  <path d="M2.5,295 L5,297.5 L7.5,295" stroke="#5a5a5a" stroke-width="1.3" fill="none"/>
</svg>
<!-- pane handle -->
<div class="abs" style="left:421px;top:374px;width:3px;height:1px;background:#777"></div>
<div class="abs" style="left:421px;top:376px;width:3px;height:1px;background:#777"></div>
<div class="abs" style="left:421px;top:378px;width:3px;height:1px;background:#777"></div>
<!-- status bar -->
<div class="abs" style="left:280px;top:547px;width:506px;height:1px;background:#a8a8a8"></div>
<svg class="abs" style="left:774px;top:551px" width="11" height="11" viewBox="0 0 11 11">
  <g fill="#b4b4b4"><rect x="8" y="2" width="2" height="2"/><rect x="8" y="5" width="2" height="2"/><rect x="8" y="8" width="2" height="2"/><rect x="5" y="5" width="2" height="2"/><rect x="5" y="8" width="2" height="2"/><rect x="2" y="8" width="2" height="2"/></g>
</svg>

<div id="botpanel"></div>
<svg class="abs" style="left:2.5px;top:584px" width="14" height="13" viewBox="0 0 14 13">
  <path d="M3,1 L11,1 L13.2,3.2 L13.2,9.8 L11,12 L3,12 L0.8,9.8 L0.8,3.2 Z" fill="#b0b28e" stroke="#4e5040" stroke-width="0.7"/>
  <path d="M0.5,0.6 L4,0.6 L0.5,4.1 Z M13.5,0.6 L10,0.6 L13.5,4.1 Z M0.5,12.4 L4,12.4 L0.5,8.9 Z M13.5,12.4 L10,12.4 L13.5,8.9 Z" fill="#4a6898" stroke="#2a3a60" stroke-width="0.6"/>
</svg>
<div class="abs" style="left:20px;top:587px;width:3px;height:1px;background:#666"></div>
<div class="abs" style="left:20px;top:590px;width:3px;height:1px;background:#7a8aa0"></div>
<div class="abs" style="left:20px;top:593px;width:3px;height:1px;background:#666"></div>
<div class="abs" style="left:26px;top:582px;width:154px;height:16px;border:1px solid #8a8a8a;border-radius:3px;background:linear-gradient(#fafafa,#e8e8e8)"></div>
<svg class="abs" style="left:28px;top:586px" width="13" height="10" viewBox="0 0 13 10">
  <path d="M2.5,0.5 L10.5,0.5 L12.5,5 L0.5,5 Z" fill="#ececec" stroke="#b8b8b8" stroke-width="0.7"/>
  <rect x="0.5" y="5" width="12" height="4.5" rx="1" fill="#e4e4e4" stroke="#b8b8b8" stroke-width="0.7"/>
</svg>
<div class="abs" style="left:734px;top:582px;width:24px;height:18px;background:#3a3d44"></div>
<div class="abs" style="left:758px;top:582px;width:23px;height:15px;background:#a8aaae"></div>
<div class="abs" style="left:744px;top:589px;width:14px;height:11px;border:1px solid #e8e8e8;background:#44546e"></div>
<svg class="abs" style="left:786px;top:586px" width="10" height="9" viewBox="0 0 10 9">
  <rect x="0.5" y="0.5" width="9" height="2.2" fill="#d8dcb8" stroke="#7a8a30" stroke-width="0.6"/>
  <path d="M0.8,2.7 L9.2,2.7 L8.6,8.6 L1.4,8.6 Z" fill="#a4b446" stroke="#6a7a20" stroke-width="0.6"/>
</svg>

<div style="position:absolute;left:22.00px;top:5.10px;line-height:1;white-space:nowrap;font-size:10.1px;font-weight:normal;letter-spacing:0.273px;color:#262626;">Applications</div>
<div style="position:absolute;left:100.30px;top:4.90px;line-height:1;white-space:nowrap;font-size:9.7px;font-weight:normal;letter-spacing:0.080px;color:#262626;">Places</div>
<div style="position:absolute;left:749.00px;top:5.40px;line-height:1;white-space:nowrap;font-size:10.2px;font-weight:normal;letter-spacing:0.700px;color:#1a1a1a;">11:32</div>
<div style="position:absolute;left:104.00px;top:24.80px;line-height:1;white-space:nowrap;font-size:10.1px;font-weight:normal;letter-spacing:0.429px;color:#1c1c1c;">thecodingstudio</div>
<div style="position:absolute;left:103.00px;top:40.80px;line-height:1;white-space:nowrap;font-size:10.1px;font-weight:normal;letter-spacing:-0.125px;color:#1c1c1c;">Trash</div>
<div style="position:absolute;left:103.40px;top:57.20px;line-height:1;white-space:nowrap;font-size:10.1px;font-weight:normal;letter-spacing:0.300px;color:#1c1c1c;">Desktop</div>
<div style="position:absolute;left:103.40px;top:73.90px;line-height:1;white-space:nowrap;font-size:10.1px;font-weight:normal;letter-spacing:0.070px;color:#1c1c1c;">File System</div>
<div style="position:absolute;left:103.40px;top:99.60px;line-height:1;white-space:nowrap;font-size:10.1px;font-weight:normal;letter-spacing:0.080px;color:#1c1c1c;">Search for Files</div>
<div style="position:absolute;left:103.40px;top:115.80px;line-height:1;white-space:nowrap;font-size:10.1px;font-weight:normal;letter-spacing:0.293px;color:#a4a4a4;">Recent Documents</div>
<div style="position:absolute;left:35.50px;top:74.00px;line-height:1;white-space:nowrap;font-size:10.2px;font-weight:normal;letter-spacing:-0.250px;color:#262626;">Trash</div>
<div style="position:absolute;left:34.00px;top:146.60px;line-height:1;white-space:nowrap;font-size:10.2px;font-weight:normal;letter-spacing:0.333px;color:#262626;">Home</div>
<div style="position:absolute;left:21.80px;top:218.30px;line-height:1;white-space:nowrap;font-size:10.2px;font-weight:normal;letter-spacing:-0.020px;color:#262626;">File System</div>
<div style="position:absolute;left:444.00px;top:171.60px;line-height:1;white-space:nowrap;font-size:10.8px;font-weight:bold;letter-spacing:0.160px;color:#ffffff;text-shadow:0 0 1px rgba(40,40,40,.8);">File System - File Manager</div>
<div style="position:absolute;left:289.30px;top:192.00px;line-height:1;white-space:nowrap;font-size:9.6px;font-weight:normal;letter-spacing:0.500px;color:#1c1c1c;">File</div>
<div style="position:absolute;left:314.60px;top:192.00px;line-height:1;white-space:nowrap;font-size:9.6px;font-weight:normal;letter-spacing:0.500px;color:#1c1c1c;">Edit</div>
<div style="position:absolute;left:345.40px;top:192.00px;line-height:1;white-space:nowrap;font-size:9.6px;font-weight:normal;letter-spacing:0.500px;color:#1c1c1c;">View</div>
<div style="position:absolute;left:377.70px;top:192.00px;line-height:1;white-space:nowrap;font-size:9.6px;font-weight:normal;letter-spacing:0.500px;color:#1c1c1c;">Go</div>
<div style="position:absolute;left:400.50px;top:192.00px;line-height:1;white-space:nowrap;font-size:9.6px;font-weight:normal;letter-spacing:0.500px;color:#1c1c1c;">Help</div>
<div style="position:absolute;left:313.60px;top:218.70px;line-height:1;white-space:nowrap;font-size:10.1px;font-weight:normal;letter-spacing:0.414px;color:#1c1c1c;">thecodingstudio</div>
<div style="position:absolute;left:312.70px;top:240.40px;line-height:1;white-space:nowrap;font-size:10.1px;font-weight:normal;letter-spacing:-0.250px;color:#1c1c1c;">Trash</div>
<div style="position:absolute;left:312.70px;top:262.40px;line-height:1;white-space:nowrap;font-size:10.1px;font-weight:normal;letter-spacing:0.267px;color:#1c1c1c;">Desktop</div>
<div style="position:absolute;left:312.70px;top:284.10px;line-height:1;white-space:nowrap;font-size:10.1px;font-weight:normal;letter-spacing:0.160px;color:#6c6c6c;">File System</div>
<div style="position:absolute;left:450.50px;top:289.70px;line-height:1;white-space:nowrap;font-size:10.4px;font-weight:normal;letter-spacing:0.450px;color:#222;">bin</div>
<div style="position:absolute;left:508.00px;top:289.70px;line-height:1;white-space:nowrap;font-size:10.4px;font-weight:normal;letter-spacing:0.450px;color:#222;">boot</div>
<div style="position:absolute;left:564.50px;top:289.70px;line-height:1;white-space:nowrap;font-size:10.4px;font-weight:normal;letter-spacing:0.450px;color:#222;">cdrom</div>
<div style="position:absolute;left:632.00px;top:289.70px;line-height:1;white-space:nowrap;font-size:10.4px;font-weight:normal;letter-spacing:0.450px;color:#222;">dev</div>
<div style="position:absolute;left:694.50px;top:289.70px;line-height:1;white-space:nowrap;font-size:10.4px;font-weight:normal;letter-spacing:0.450px;color:#222;">etc</div>
<div style="position:absolute;left:444.00px;top:352.70px;line-height:1;white-space:nowrap;font-size:10.4px;font-weight:normal;letter-spacing:0.450px;color:#222;">home</div>
<div style="position:absolute;left:513.00px;top:352.70px;line-height:1;white-space:nowrap;font-size:10.4px;font-weight:normal;letter-spacing:0.450px;color:#222;">lib</div>
<div style="position:absolute;left:553.50px;top:352.70px;line-height:1;white-space:nowrap;font-size:10.4px;font-weight:normal;letter-spacing:0.450px;color:#222;">lost+found</div>
<div style="position:absolute;left:625.50px;top:352.70px;line-height:1;white-space:nowrap;font-size:10.4px;font-weight:normal;letter-spacing:0.450px;color:#222;">media</div>
<div style="position:absolute;left:692.50px;top:352.70px;line-height:1;white-space:nowrap;font-size:10.4px;font-weight:normal;letter-spacing:0.450px;color:#222;">mnt</div>
<div style="position:absolute;left:450.00px;top:415.70px;line-height:1;white-space:nowrap;font-size:10.4px;font-weight:normal;letter-spacing:0.450px;color:#222;">opt</div>
<div style="position:absolute;left:508.50px;top:415.70px;line-height:1;white-space:nowrap;font-size:10.4px;font-weight:normal;letter-spacing:0.450px;color:#222;">proc</div>
<div style="position:absolute;left:570.00px;top:415.70px;line-height:1;white-space:nowrap;font-size:10.4px;font-weight:normal;letter-spacing:0.450px;color:#222;">root</div>
<div style="position:absolute;left:630.50px;top:415.70px;line-height:1;white-space:nowrap;font-size:10.4px;font-weight:normal;letter-spacing:0.450px;color:#222;">sbin</div>
<div style="position:absolute;left:694.50px;top:415.70px;line-height:1;white-space:nowrap;font-size:10.4px;font-weight:normal;letter-spacing:0.450px;color:#222;">srv</div>
<div style="position:absolute;left:449.50px;top:478.70px;line-height:1;white-space:nowrap;font-size:10.4px;font-weight:normal;letter-spacing:0.450px;color:#222;">sys</div>
<div style="position:absolute;left:510.00px;top:478.70px;line-height:1;white-space:nowrap;font-size:10.4px;font-weight:normal;letter-spacing:0.450px;color:#222;">tmp</div>
<div style="position:absolute;left:572.00px;top:478.70px;line-height:1;white-space:nowrap;font-size:10.4px;font-weight:normal;letter-spacing:0.450px;color:#222;">usr</div>
<div style="position:absolute;left:633.50px;top:478.70px;line-height:1;white-space:nowrap;font-size:10.4px;font-weight:normal;letter-spacing:0.450px;color:#222;">var</div>
<div style="position:absolute;left:678.50px;top:478.70px;line-height:1;white-space:nowrap;font-size:10.4px;font-weight:normal;letter-spacing:0.450px;color:#222;">initrd.img</div>
<div style="position:absolute;left:284.20px;top:550.00px;line-height:1;white-space:nowrap;font-size:10.1px;font-weight:normal;letter-spacing:0.216px;color:#3a3a3a;">21 items (10.0 MB), Free space: 7.1 GB</div>
<div style="position:absolute;left:49.60px;top:585.60px;line-height:1;white-space:nowrap;font-size:9.7px;font-weight:normal;letter-spacing:0.232px;color:#141414;">File System - File Manager</div>
</body></html>
